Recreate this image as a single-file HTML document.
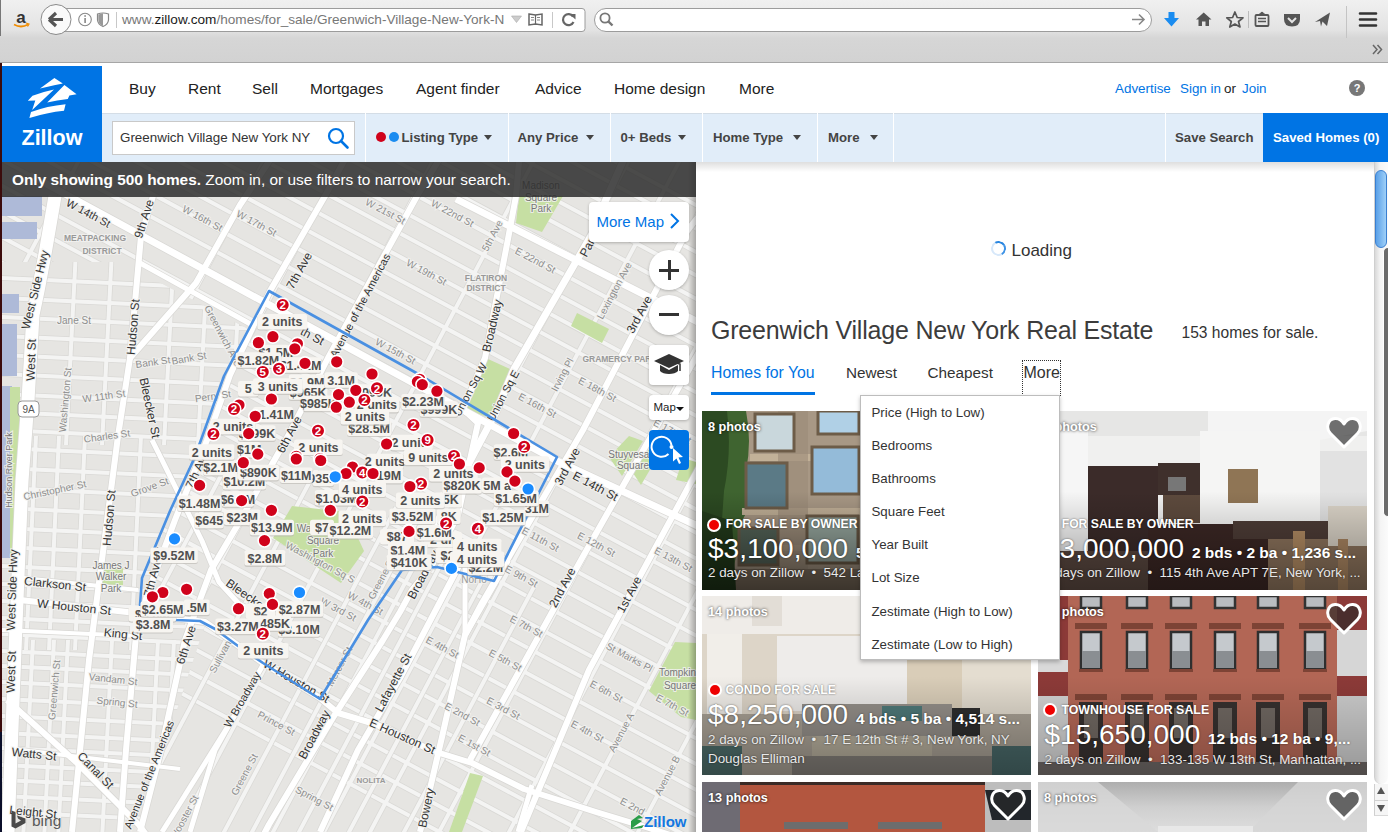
<!DOCTYPE html>
<html><head><meta charset="utf-8">
<style>
*{margin:0;padding:0;box-sizing:border-box}
html,body{width:1388px;height:832px;overflow:hidden;background:#fff;font-family:"Liberation Sans",sans-serif}
.a{position:absolute}
.t{position:absolute;white-space:nowrap;line-height:1}
#chrome{left:0;top:0;width:1388px;height:63px;background:linear-gradient(#f0f0f0 0,#e3e3e3 30px,#d6d6d6 38px,#d2d2d2 62px);border-bottom:1px solid #a6a6a6}
.nav{font-size:15.5px;color:#222;margin-top:-1px}
.flt{font-size:13.2px;font-weight:bold;color:#444}
.caret{position:absolute;width:0;height:0;border-left:4px solid transparent;border-right:4px solid transparent;border-top:5px solid #444}
.sep{position:absolute;top:113px;width:1px;height:49px;background:#fff}
.card{position:absolute;width:329px;height:179px;overflow:hidden}
.ph{font-size:12.7px;color:#fff;font-weight:bold;text-shadow:0 0 3px rgba(0,0,0,.8)}
.stat{font-size:13.5px;font-weight:bold;color:#fff;text-shadow:0 0 2px rgba(0,0,0,.6)}
.price{font-size:27px;color:#fff;text-shadow:0 0 2px rgba(0,0,0,.6)}
.facts{font-size:16px;font-weight:bold;color:#fff;text-shadow:0 0 2px rgba(0,0,0,.6)}
.sub{font-size:14px;color:#e8e8e8;text-shadow:0 0 2px rgba(0,0,0,.6)}
.dd{font-size:13.5px;color:#333}
</style></head><body>
<!-- browser chrome -->
<div id="chrome" class="a"></div>
<svg class="a" style="left:0;top:0" width="1388" height="63" viewBox="0 0 1388 63" font-family="Liberation Sans, sans-serif">
<text x="21" y="23" font-size="17" font-weight="bold" fill="#333" text-anchor="middle">a</text>
<path d="M14 24.5 Q21 28.5 28 24.5" fill="none" stroke="#f08c00" stroke-width="1.8"/><path d="M26 23 L29 24 L27.5 26.5" fill="none" stroke="#f08c00" stroke-width="1.2"/>
<rect x="60" y="8.5" width="525" height="23" rx="3" fill="#fff" stroke="#9c9c9c"/>
<circle cx="56" cy="19.5" r="15" fill="#fafafa" stroke="#8a8a8a"/>
<path d="M49 19.5 L56 13 M49 19.5 L56 26 M49.5 19.5 L63 19.5" stroke="#555" stroke-width="3.2" fill="none" stroke-linecap="butt"/>
<circle cx="85" cy="19.5" r="6.3" fill="none" stroke="#888" stroke-width="1.1"/><rect x="84.3" y="18" width="1.6" height="5" fill="#888"/><rect x="84.3" y="15.2" width="1.6" height="1.6" fill="#888"/>
<path d="M97.5 14 Q103 12 108.5 14 L108.5 20 Q108 24.5 103 26.5 Q98 24.5 97.5 20 Z" fill="none" stroke="#888" stroke-width="1.2"/><path d="M103 13.2 L103 26 Q98.5 24 98.3 20 L98.3 14.5 Z" fill="#999"/>
<rect x="116" y="12" width="1" height="16" fill="#c8c8c8"/>
<text x="122" y="24.3" font-size="13.6" fill="#777"><tspan>www.</tspan><tspan fill="#1a1a1a">zillow.com</tspan><tspan>/homes/for_sale/Greenwich-Village-New-York-N</tspan></text>
<rect x="504" y="10" width="10" height="20" fill="#fff"/>
<path d="M511.5 16 L521.5 16 L516.5 22.5 Z" fill="#ccc" stroke="#aaa" stroke-width=".6"/>
<path d="M529 14 L535.5 15 L542 14 L542 25 L535.5 24 L529 25 Z" fill="none" stroke="#666" stroke-width="1.5"/><path d="M535.5 15 L535.5 24" stroke="#666" stroke-width="1.2"/><path d="M531 17.5 L534 17.5 M531 20 L534 20 M537 17.5 L540 17.5 M537 20 L540 20" stroke="#777" stroke-width=".9"/>
<rect x="552" y="12" width="1" height="16" fill="#c8c8c8"/>
<path d="M573 16.5 A5.5 5.5 0 1 0 573.5 22" fill="none" stroke="#666" stroke-width="2.2"/><path d="M569.5 14 L575.5 14 L575.5 19.5 Z" fill="#666"/>
<rect x="594.5" y="8.5" width="557" height="23" rx="11.5" fill="#fff" stroke="#9c9c9c"/>
<circle cx="605" cy="18" r="4.6" fill="none" stroke="#777" stroke-width="1.8"/><path d="M608.3 21.3 L612.5 25.5" stroke="#777" stroke-width="2.4"/>
<path d="M1132 19.5 L1144 19.5 M1139 14.5 L1144 19.5 L1139 24.5" fill="none" stroke="#888" stroke-width="1.6"/>
<path d="M1168.5 12 L1174.5 12 L1174.5 18 L1179 18 L1171.5 26.5 L1164 18 L1168.5 18 Z" fill="#1a8cf0"/>
<path d="M1203.7 12.5 L1211.5 19.5 L1209 19.5 L1209 26 L1205.5 26 L1205.5 21.5 L1202 21.5 L1202 26 L1198.5 26 L1198.5 19.5 L1196 19.5 Z" fill="#555"/>
<path d="M1234.9 12 L1237.2 17.5 L1243 17.8 L1238.5 21.5 L1240 27 L1234.9 24 L1229.8 27 L1231.3 21.5 L1226.8 17.8 L1232.6 17.5 Z" fill="none" stroke="#555" stroke-width="1.7" stroke-linejoin="round"/>
<rect x="1248" y="11" width="1" height="17" fill="#bbb"/>
<rect x="1255.5" y="15" width="13" height="11" rx="1" fill="none" stroke="#555" stroke-width="1.8"/><path d="M1259 14.5 L1262 12 L1265 14.5" fill="#555" stroke="#555"/><path d="M1258 18.5 L1266 18.5 M1258 21.5 L1266 21.5" stroke="#555" stroke-width="1.3"/>
<path d="M1284 14 L1300 14 L1300 19 Q1300 26.5 1292 26.5 Q1284 26.5 1284 19 Z" fill="#555"/><path d="M1288 18 L1292 22 L1296 18" fill="none" stroke="#e4e4e4" stroke-width="2"/>
<path d="M1315 22 L1330 12.5 L1327 26 L1322.5 21.5 L1321 26.5 L1320 21 Z" fill="#555"/>
<rect x="1346" y="6" width="1" height="32" fill="#c4c4c4"/>
<path d="M1360 13.5 L1376 13.5 M1360 19.5 L1376 19.5 M1360 25.5 L1376 25.5" stroke="#333" stroke-width="2.6" stroke-linecap="round"/>
<path d="M1373 45 L1377 49.5 L1373 54 M1377.5 45 L1381.5 49.5 L1377.5 54" fill="none" stroke="#666" stroke-width="1.5"/>
</svg>
<div class="a" style="left:0;top:63px;width:2px;height:669px;background:#3b0b0b;z-index:50"></div><div class="a" style="left:0;top:732px;width:2px;height:100px;background:#0b0f2a;z-index:50"></div><div class="a" style="left:0;top:0;width:1px;height:36px;background:#777;z-index:50"></div>

<!-- zillow header -->
<div class="a" style="left:2px;top:63px;width:1386px;height:50px;background:#fff"></div>
<div class="a" style="left:2px;top:66px;width:100px;height:96px;background:#0074e4;z-index:5"></div>
<svg class="a" style="left:2px;top:66px;z-index:6" width="100" height="96" viewBox="0 0 100 96" font-family="Liberation Sans, sans-serif">
<path d="M38 22.6 L52.4 11.9 L60.8 17.6 Q55 18.5 38 22.6 Z" fill="#fff"/>
<path d="M25.8 34.8 L30.5 29.8 Q40 26 52 23.5 L30.2 44.1 L33.3 34.4 Z" fill="#fff"/>
<path d="M45.2 36.6 L62.4 19.1 L74.6 28.2 L67.4 29.4 L65.8 32.9 Q55 34 45.2 36.6 Z" fill="#fff"/>
<path d="M29 46 Q45 40 63.6 38.2 L62 44.8 Q45 46.5 27.4 52 Z" fill="#fff"/>
<text x="19.5" y="79" font-size="21.5" font-weight="bold" fill="#fff">Zillow</text>
</svg>
<div class="t nav" style="left:129px;top:81.5px">Buy</div>
<div class="t nav" style="left:188px;top:81.5px">Rent</div>
<div class="t nav" style="left:252px;top:81.5px">Sell</div>
<div class="t nav" style="left:310px;top:81.5px">Mortgages</div>
<div class="t nav" style="left:416px;top:81.5px">Agent finder</div>
<div class="t nav" style="left:535px;top:81.5px">Advice</div>
<div class="t nav" style="left:614px;top:81.5px">Home design</div>
<div class="t nav" style="left:739px;top:81.5px">More</div>
<div class="t" style="left:1115px;top:81.5px;font-size:13.4px;color:#0074e4">Advertise</div>
<div class="t" style="left:1180px;top:81.5px;font-size:13.4px;color:#0074e4">Sign in</div>
<div class="t" style="left:1224px;top:81.5px;font-size:13.4px;color:#222">or</div>
<div class="t" style="left:1242px;top:81.5px;font-size:13.4px;color:#0074e4">Join</div>
<div class="a" style="left:1349px;top:80px;width:16px;height:16px;border-radius:50%;background:#777;color:#fff;font-size:11px;font-weight:bold;text-align:center;line-height:16px">?</div>

<!-- filter bar -->
<div class="a" style="left:2px;top:113px;width:1386px;height:49px;background:#e1edf9;border-top:1px solid #d4dde6"></div>
<div class="a" style="left:112px;top:121px;width:243px;height:34px;background:#fff;border:1px solid #c9c9c9"></div>
<div class="t" style="left:120px;top:131px;font-size:13.4px;color:#333">Greenwich Village New York NY</div>
<svg class="a" style="left:326px;top:126px" width="24" height="24" viewBox="0 0 24 24"><circle cx="10" cy="10" r="7" fill="none" stroke="#0074e4" stroke-width="2.2"/><path d="M15 15 L21.5 21.5" stroke="#0074e4" stroke-width="2.6" stroke-linecap="round"/></svg>
<div class="sep" style="left:365px"></div>
<div class="sep" style="left:508px"></div>
<div class="sep" style="left:610px"></div>
<div class="sep" style="left:702px"></div>
<div class="sep" style="left:817px"></div>
<div class="sep" style="left:893px"></div>
<div class="sep" style="left:1165px"></div>
<div class="a" style="left:376px;top:132px;width:10px;height:10px;border-radius:50%;background:#d0021b"></div>
<div class="a" style="left:389px;top:132px;width:10px;height:10px;border-radius:50%;background:#1b8cf0"></div>
<div class="t flt" style="left:401.5px;top:131px">Listing Type</div><div class="caret" style="left:484px;top:135px"></div>
<div class="t flt" style="left:517.5px;top:131px">Any Price</div><div class="caret" style="left:586px;top:135px"></div>
<div class="t flt" style="left:620.5px;top:131px">0+ Beds</div><div class="caret" style="left:678px;top:135px"></div>
<div class="t flt" style="left:713px;top:131px">Home Type</div><div class="caret" style="left:793px;top:135px"></div>
<div class="t flt" style="left:828px;top:131px">More</div><div class="caret" style="left:870px;top:135px"></div>
<div class="t flt" style="left:1175px;top:131px">Save Search</div>
<div class="a" style="left:1263px;top:113px;width:125px;height:49px;background:#0074e4"></div>
<div class="t flt" style="left:1273px;top:131px;color:#fff">Saved Homes (0)</div>

<!-- map -->
<svg class="a" style="left:0;top:0" width="696" height="832" viewBox="0 0 696 832">
<defs><clipPath id="mc"><rect x="2" y="162" width="694" height="670"/></clipPath><clipPath id="westc"><polygon points="2,262 121,262 250,330 222,376 200,440 170,510 141,604 141,625 205,625 180,700 140,832 2,832"/></clipPath><clipPath id="eastc"><polygon points="121,150 700,150 700,832 140,832 180,700 205,625 141,625 141,604 170,510 200,440 222,376 250,330 121,262 2,262 2,150"/></clipPath></defs>
<g clip-path="url(#mc)">
<rect x="0" y="150" width="700" height="690" fill="#e6e5e2"/>
<g clip-path="url(#eastc)" stroke="#d9d8d5" stroke-width="5.5"><line x1="-50.0" y1="-195.5" x2="750.0" y2="234.1"/><line x1="-50.0" y1="-172.1" x2="750.0" y2="257.5"/><line x1="-50.0" y1="-148.7" x2="750.0" y2="280.9"/><line x1="-50.0" y1="-125.3" x2="750.0" y2="304.3"/><line x1="-50.0" y1="-101.9" x2="750.0" y2="327.7"/><line x1="-50.0" y1="-78.5" x2="750.0" y2="351.1"/><line x1="-50.0" y1="-55.1" x2="750.0" y2="374.5"/><line x1="-50.0" y1="-31.7" x2="750.0" y2="397.9"/><line x1="-50.0" y1="-8.3" x2="750.0" y2="421.3"/><line x1="-50.0" y1="15.1" x2="750.0" y2="444.7"/><line x1="-50.0" y1="38.5" x2="750.0" y2="468.1"/><line x1="-50.0" y1="61.9" x2="750.0" y2="491.5"/><line x1="-50.0" y1="85.3" x2="750.0" y2="514.9"/><line x1="-50.0" y1="108.7" x2="750.0" y2="538.3"/><line x1="-50.0" y1="132.1" x2="750.0" y2="561.7"/><line x1="-50.0" y1="157.8" x2="750.0" y2="587.4"/><line x1="-50.0" y1="183.5" x2="750.0" y2="613.1"/><line x1="-50.0" y1="209.2" x2="750.0" y2="638.8"/><line x1="-50.0" y1="234.9" x2="750.0" y2="664.5"/><line x1="-50.0" y1="260.6" x2="750.0" y2="690.2"/><line x1="-50.0" y1="286.3" x2="750.0" y2="715.9"/><line x1="-50.0" y1="312.0" x2="750.0" y2="741.6"/><line x1="-50.0" y1="337.7" x2="750.0" y2="767.3"/><line x1="-50.0" y1="363.4" x2="750.0" y2="793.0"/><line x1="-50.0" y1="389.1" x2="750.0" y2="818.7"/><line x1="-50.0" y1="414.8" x2="750.0" y2="844.4"/><line x1="-50.0" y1="440.5" x2="750.0" y2="870.1"/><line x1="-50.0" y1="466.2" x2="750.0" y2="895.8"/><line x1="-50.0" y1="491.9" x2="750.0" y2="921.5"/><line x1="-50.0" y1="517.6" x2="750.0" y2="947.2"/><line x1="-50.0" y1="543.3" x2="750.0" y2="972.9"/><line x1="-50.0" y1="569.0" x2="750.0" y2="998.6"/><line x1="111.0" y1="100.0" x2="-313.0" y2="900.0"/><line x1="296.0" y1="100.0" x2="-128.0" y2="900.0"/><line x1="375.0" y1="100.0" x2="-49.0" y2="900.0"/><line x1="465.0" y1="100.0" x2="41.0" y2="900.0"/><line x1="566.0" y1="100.0" x2="142.0" y2="900.0"/><line x1="661.0" y1="100.0" x2="237.0" y2="900.0"/><line x1="712.0" y1="100.0" x2="288.0" y2="900.0"/><line x1="758.0" y1="100.0" x2="334.0" y2="900.0"/><line x1="827.0" y1="100.0" x2="403.0" y2="900.0"/><line x1="897.0" y1="100.0" x2="473.0" y2="900.0"/><line x1="958.0" y1="100.0" x2="534.0" y2="900.0"/><line x1="1026.0" y1="100.0" x2="602.0" y2="900.0"/></g>
<g clip-path="url(#eastc)" stroke="#f4f4f3" stroke-width="4"><line x1="-50.0" y1="-195.5" x2="750.0" y2="234.1"/><line x1="-50.0" y1="-172.1" x2="750.0" y2="257.5"/><line x1="-50.0" y1="-148.7" x2="750.0" y2="280.9"/><line x1="-50.0" y1="-125.3" x2="750.0" y2="304.3"/><line x1="-50.0" y1="-101.9" x2="750.0" y2="327.7"/><line x1="-50.0" y1="-78.5" x2="750.0" y2="351.1"/><line x1="-50.0" y1="-55.1" x2="750.0" y2="374.5"/><line x1="-50.0" y1="-31.7" x2="750.0" y2="397.9"/><line x1="-50.0" y1="-8.3" x2="750.0" y2="421.3"/><line x1="-50.0" y1="15.1" x2="750.0" y2="444.7"/><line x1="-50.0" y1="38.5" x2="750.0" y2="468.1"/><line x1="-50.0" y1="61.9" x2="750.0" y2="491.5"/><line x1="-50.0" y1="85.3" x2="750.0" y2="514.9"/><line x1="-50.0" y1="108.7" x2="750.0" y2="538.3"/><line x1="-50.0" y1="132.1" x2="750.0" y2="561.7"/><line x1="-50.0" y1="157.8" x2="750.0" y2="587.4"/><line x1="-50.0" y1="183.5" x2="750.0" y2="613.1"/><line x1="-50.0" y1="209.2" x2="750.0" y2="638.8"/><line x1="-50.0" y1="234.9" x2="750.0" y2="664.5"/><line x1="-50.0" y1="260.6" x2="750.0" y2="690.2"/><line x1="-50.0" y1="286.3" x2="750.0" y2="715.9"/><line x1="-50.0" y1="312.0" x2="750.0" y2="741.6"/><line x1="-50.0" y1="337.7" x2="750.0" y2="767.3"/><line x1="-50.0" y1="363.4" x2="750.0" y2="793.0"/><line x1="-50.0" y1="389.1" x2="750.0" y2="818.7"/><line x1="-50.0" y1="414.8" x2="750.0" y2="844.4"/><line x1="-50.0" y1="440.5" x2="750.0" y2="870.1"/><line x1="-50.0" y1="466.2" x2="750.0" y2="895.8"/><line x1="-50.0" y1="491.9" x2="750.0" y2="921.5"/><line x1="-50.0" y1="517.6" x2="750.0" y2="947.2"/><line x1="-50.0" y1="543.3" x2="750.0" y2="972.9"/><line x1="-50.0" y1="569.0" x2="750.0" y2="998.6"/><line x1="111.0" y1="100.0" x2="-313.0" y2="900.0"/><line x1="296.0" y1="100.0" x2="-128.0" y2="900.0"/><line x1="375.0" y1="100.0" x2="-49.0" y2="900.0"/><line x1="465.0" y1="100.0" x2="41.0" y2="900.0"/><line x1="566.0" y1="100.0" x2="142.0" y2="900.0"/><line x1="661.0" y1="100.0" x2="237.0" y2="900.0"/><line x1="712.0" y1="100.0" x2="288.0" y2="900.0"/><line x1="758.0" y1="100.0" x2="334.0" y2="900.0"/><line x1="827.0" y1="100.0" x2="403.0" y2="900.0"/><line x1="897.0" y1="100.0" x2="473.0" y2="900.0"/><line x1="958.0" y1="100.0" x2="534.0" y2="900.0"/><line x1="1026.0" y1="100.0" x2="602.0" y2="900.0"/></g>
<clipPath id="densec"><polygon points="150,470 330,470 560,600 560,832 140,832"/></clipPath>
<g clip-path="url(#eastc)"><g clip-path="url(#densec)" stroke="#d9d8d5" stroke-width="5.5"><line x1="420.0" y1="100" x2="-4.0" y2="900"/><line x1="512.0" y1="100" x2="88.0" y2="900"/><line x1="612.0" y1="100" x2="188.0" y2="900"/><line x1="640.0" y1="100" x2="216.0" y2="900"/><line x1="687.0" y1="100" x2="263.0" y2="900"/><line x1="737.0" y1="100" x2="313.0" y2="900"/><line x1="792.0" y1="100" x2="368.0" y2="900"/></g></g>
<g clip-path="url(#eastc)"><g clip-path="url(#densec)" stroke="#f4f4f3" stroke-width="4"><line x1="420.0" y1="100" x2="-4.0" y2="900"/><line x1="512.0" y1="100" x2="88.0" y2="900"/><line x1="612.0" y1="100" x2="188.0" y2="900"/><line x1="640.0" y1="100" x2="216.0" y2="900"/><line x1="687.0" y1="100" x2="263.0" y2="900"/><line x1="737.0" y1="100" x2="313.0" y2="900"/><line x1="792.0" y1="100" x2="368.0" y2="900"/></g></g>
<g clip-path="url(#westc)" stroke="#d9d8d5" stroke-width="5.5"><line x1="0" y1="278" x2="260" y2="290"/><line x1="0" y1="298" x2="260" y2="310"/><line x1="0" y1="317" x2="260" y2="329"/><line x1="0" y1="336" x2="260" y2="348"/><line x1="0" y1="355" x2="260" y2="367"/><line x1="0" y1="374" x2="260" y2="386"/><line x1="0" y1="394" x2="260" y2="406"/><line x1="0" y1="412" x2="260" y2="424"/><line x1="0" y1="430" x2="260" y2="442"/><line x1="0" y1="448" x2="260" y2="460"/><line x1="0" y1="468" x2="260" y2="480"/><line x1="0" y1="488" x2="260" y2="500"/><line x1="0" y1="508" x2="260" y2="520"/><line x1="0" y1="528" x2="260" y2="540"/><line x1="0" y1="547" x2="260" y2="559"/><line x1="0" y1="566" x2="260" y2="578"/><line x1="0" y1="584" x2="260" y2="596"/><line x1="0" y1="601" x2="260" y2="613"/><line x1="0" y1="618" x2="260" y2="630"/><line x1="0" y1="634" x2="260" y2="646"/><line x1="0" y1="651" x2="260" y2="663"/><line x1="0" y1="666" x2="260" y2="678"/><line x1="0" y1="682" x2="260" y2="694"/><line x1="0" y1="699" x2="260" y2="711"/><line x1="0" y1="716" x2="260" y2="728"/><line x1="0" y1="733" x2="260" y2="745"/><line x1="0" y1="748" x2="260" y2="760"/><line x1="0" y1="765" x2="260" y2="777"/><line x1="0" y1="780" x2="260" y2="792"/><line x1="0" y1="796" x2="260" y2="808"/><line x1="0" y1="812" x2="260" y2="824"/><line x1="76" y1="250" x2="66" y2="445"/><line x1="112" y1="250" x2="102" y2="445"/><line x1="174" y1="250" x2="164" y2="445"/><line x1="208" y1="250" x2="198" y2="445"/><line x1="241" y1="250" x2="231" y2="445"/><line x1="36" y1="436" x2="26" y2="650"/><line x1="59" y1="436" x2="49" y2="650"/><line x1="85" y1="436" x2="75" y2="650"/><line x1="141" y1="436" x2="131" y2="650"/><line x1="15" y1="640" x2="5" y2="840"/><line x1="33" y1="640" x2="23" y2="840"/><line x1="54" y1="640" x2="44" y2="840"/><line x1="68" y1="640" x2="58" y2="840"/><line x1="112" y1="640" x2="102" y2="840"/><line x1="158" y1="640" x2="148" y2="840"/><line x1="174" y1="640" x2="164" y2="840"/></g>
<g clip-path="url(#westc)" stroke="#f4f4f3" stroke-width="4"><line x1="0" y1="278" x2="260" y2="290"/><line x1="0" y1="298" x2="260" y2="310"/><line x1="0" y1="317" x2="260" y2="329"/><line x1="0" y1="336" x2="260" y2="348"/><line x1="0" y1="355" x2="260" y2="367"/><line x1="0" y1="374" x2="260" y2="386"/><line x1="0" y1="394" x2="260" y2="406"/><line x1="0" y1="412" x2="260" y2="424"/><line x1="0" y1="430" x2="260" y2="442"/><line x1="0" y1="448" x2="260" y2="460"/><line x1="0" y1="468" x2="260" y2="480"/><line x1="0" y1="488" x2="260" y2="500"/><line x1="0" y1="508" x2="260" y2="520"/><line x1="0" y1="528" x2="260" y2="540"/><line x1="0" y1="547" x2="260" y2="559"/><line x1="0" y1="566" x2="260" y2="578"/><line x1="0" y1="584" x2="260" y2="596"/><line x1="0" y1="601" x2="260" y2="613"/><line x1="0" y1="618" x2="260" y2="630"/><line x1="0" y1="634" x2="260" y2="646"/><line x1="0" y1="651" x2="260" y2="663"/><line x1="0" y1="666" x2="260" y2="678"/><line x1="0" y1="682" x2="260" y2="694"/><line x1="0" y1="699" x2="260" y2="711"/><line x1="0" y1="716" x2="260" y2="728"/><line x1="0" y1="733" x2="260" y2="745"/><line x1="0" y1="748" x2="260" y2="760"/><line x1="0" y1="765" x2="260" y2="777"/><line x1="0" y1="780" x2="260" y2="792"/><line x1="0" y1="796" x2="260" y2="808"/><line x1="0" y1="812" x2="260" y2="824"/><line x1="76" y1="250" x2="66" y2="445"/><line x1="112" y1="250" x2="102" y2="445"/><line x1="174" y1="250" x2="164" y2="445"/><line x1="208" y1="250" x2="198" y2="445"/><line x1="241" y1="250" x2="231" y2="445"/><line x1="36" y1="436" x2="26" y2="650"/><line x1="59" y1="436" x2="49" y2="650"/><line x1="85" y1="436" x2="75" y2="650"/><line x1="141" y1="436" x2="131" y2="650"/><line x1="15" y1="640" x2="5" y2="840"/><line x1="33" y1="640" x2="23" y2="840"/><line x1="54" y1="640" x2="44" y2="840"/><line x1="68" y1="640" x2="58" y2="840"/><line x1="112" y1="640" x2="102" y2="840"/><line x1="158" y1="640" x2="148" y2="840"/><line x1="174" y1="640" x2="164" y2="840"/></g>
<rect x="2" y="196" width="40" height="20" fill="#aebad8"/>
<rect x="2" y="222" width="35" height="17" fill="#aebad8"/>
<rect x="2" y="294" width="17" height="19" fill="#aebad8"/>
<rect x="2" y="324" width="15" height="52" fill="#aebad8"/>
<rect x="2" y="386" width="10" height="50" fill="#aebad8"/>
<rect x="2" y="436" width="8" height="122" fill="#aebad8"/>
<rect x="10" y="387" width="10" height="170" fill="#c6dfa3"/>
<polygon points="519.0,196.0 563.0,196.0 542.0,232.0 516.0,223.0" fill="#c6dfa3"/>
<polygon points="488.0,359.0 512.0,370.0 491.0,418.0 463.0,409.0" fill="#c6dfa3"/>
<polygon points="577.0,313.0 609.0,329.0 602.0,343.0 571.0,326.0" fill="#c6dfa3"/>
<polygon points="292.0,506.0 346.0,512.0 364.0,551.0 341.0,583.0 273.0,538.0" fill="#c6dfa3"/>
<polygon points="675.0,642.0 696.0,643.0 696.0,720.0 681.0,717.0 649.0,691.0" fill="#c6dfa3"/>
<polygon points="470.0,773.0 483.0,776.0 462.0,832.0 449.0,832.0" fill="#c6dfa3"/>
<polygon points="609.0,457.0 629.0,436.0 643.0,441.0 622.0,476.0" fill="#c6dfa3"/>
<polygon points="629.0,467.0 652.0,447.0 658.0,456.0 641.0,485.0" fill="#c6dfa3"/>
<polygon points="102.0,568.0 123.0,568.0 123.0,587.0 102.0,587.0" fill="#c6dfa3"/>
<polygon points="683.0,458.0 696.0,462.0 696.0,484.0 676.0,480.0" fill="#c6dfa3"/>
<polyline points="55.0,196.0 45.0,254.0 38.0,291.0 33.0,315.0 28.0,400.0 22.0,481.0 17.0,600.0 13.0,702.0 8.0,832.0" fill="none" stroke="#d9d8d5" stroke-width="14.5" stroke-linejoin="round"/>
<polyline points="30.0,175.0 557.0,461.0 700.0,527.0" fill="none" stroke="#d9d8d5" stroke-width="8.5" stroke-linejoin="round"/>
<polyline points="153.0,196.0 141.0,236.0 130.0,358.0 118.0,436.0 89.0,660.0 72.0,832.0" fill="none" stroke="#d9d8d5" stroke-width="7.5" stroke-linejoin="round"/>
<polyline points="270.0,160.0 240.0,205.0 196.0,283.0 130.0,358.0" fill="none" stroke="#d9d8d5" stroke-width="7.5" stroke-linejoin="round"/>
<polyline points="140.0,263.0 254.0,326.0" fill="none" stroke="#d9d8d5" stroke-width="6.5" stroke-linejoin="round"/>
<polyline points="350.0,150.0 325.0,196.0 270.0,291.0 230.0,375.0 207.0,440.0 175.0,520.0 147.0,595.0 136.0,635.0 126.0,750.0 120.0,832.0" fill="none" stroke="#d9d8d5" stroke-width="7.5" stroke-linejoin="round"/>
<polyline points="445.0,150.0 417.0,196.0 328.0,358.0 288.0,436.0 240.0,521.0 211.0,570.0 185.0,640.0 161.0,750.0 140.0,832.0" fill="none" stroke="#d9d8d5" stroke-width="7.5" stroke-linejoin="round"/>
<polyline points="520.0,150.0 516.0,196.0 508.0,239.0 485.0,358.0 463.0,409.0 478.0,423.0 458.0,515.0 432.0,565.0 412.0,590.0 400.0,612.0 383.0,640.0 334.0,716.0 269.0,824.5 264.0,834.0" fill="none" stroke="#d9d8d5" stroke-width="7.5" stroke-linejoin="round"/>
<polyline points="628.0,150.0 600.0,213.0 592.0,234.0 514.0,369.0 496.0,412.0 460.0,480.0 430.0,535.0" fill="none" stroke="#d9d8d5" stroke-width="8.5" stroke-linejoin="round"/>
<polyline points="456.0,199.0 700.0,323.0" fill="none" stroke="#d9d8d5" stroke-width="8.5" stroke-linejoin="round"/>
<polyline points="720.0,190.0 687.0,231.0 583.0,430.0 482.0,603.0 465.0,635.0" fill="none" stroke="#d9d8d5" stroke-width="7.5" stroke-linejoin="round"/>
<polyline points="700.0,350.0 581.0,560.0 470.0,760.0" fill="none" stroke="#d9d8d5" stroke-width="7.5" stroke-linejoin="round"/>
<polyline points="710.0,446.0 696.0,473.0 589.0,670.0 521.0,832.0" fill="none" stroke="#d9d8d5" stroke-width="7.5" stroke-linejoin="round"/>
<polyline points="152.0,440.0 162.0,460.0 202.0,541.0 219.0,582.0 240.0,605.0 260.0,612.0" fill="none" stroke="#d9d8d5" stroke-width="6.5" stroke-linejoin="round"/>
<polyline points="20.0,600.0 136.0,613.0 205.0,622.0 263.0,663.0 320.0,698.0 338.0,713.0 375.0,724.0 433.0,751.0 472.0,763.0 524.0,789.0 596.0,812.0 649.0,828.0 700.0,845.0" fill="none" stroke="#d9d8d5" stroke-width="7.5" stroke-linejoin="round"/>
<polyline points="508.0,560.0 465.0,635.0 442.0,737.0 420.0,832.0" fill="none" stroke="#d9d8d5" stroke-width="7.5" stroke-linejoin="round"/>
<polyline points="465.0,560.0 465.0,635.0" fill="none" stroke="#d9d8d5" stroke-width="6.5" stroke-linejoin="round"/>
<polyline points="462.0,560.0 420.0,640.0 400.0,678.0 358.0,750.0 320.0,832.0" fill="none" stroke="#d9d8d5" stroke-width="7.5" stroke-linejoin="round"/>
<polyline points="263.0,665.0 215.0,750.0 190.0,832.0" fill="none" stroke="#d9d8d5" stroke-width="6.5" stroke-linejoin="round"/>
<polyline points="7.0,700.0 76.0,762.0 139.0,825.0 150.0,840.0" fill="none" stroke="#d9d8d5" stroke-width="7.5" stroke-linejoin="round"/>
<polyline points="5.0,748.0 180.0,769.0" fill="none" stroke="#d9d8d5" stroke-width="5.5" stroke-linejoin="round"/>
<polyline points="23.0,578.0 138.0,590.0" fill="none" stroke="#d9d8d5" stroke-width="5.5" stroke-linejoin="round"/>
<polyline points="0.0,630.0 136.0,636.0" fill="none" stroke="#d9d8d5" stroke-width="5.5" stroke-linejoin="round"/>
<polyline points="240.0,707.0 162.0,832.0" fill="none" stroke="#d9d8d5" stroke-width="6.5" stroke-linejoin="round"/>
<polyline points="532.0,785.0 518.0,832.0" fill="none" stroke="#d9d8d5" stroke-width="6.5" stroke-linejoin="round"/>
<polyline points="55.0,196.0 45.0,254.0 38.0,291.0 33.0,315.0 28.0,400.0 22.0,481.0 17.0,600.0 13.0,702.0 8.0,832.0" fill="none" stroke="#ffffff" stroke-width="13" stroke-linejoin="round"/>
<polyline points="30.0,175.0 557.0,461.0 700.0,527.0" fill="none" stroke="#ffffff" stroke-width="7" stroke-linejoin="round"/>
<polyline points="153.0,196.0 141.0,236.0 130.0,358.0 118.0,436.0 89.0,660.0 72.0,832.0" fill="none" stroke="#ffffff" stroke-width="6" stroke-linejoin="round"/>
<polyline points="270.0,160.0 240.0,205.0 196.0,283.0 130.0,358.0" fill="none" stroke="#ffffff" stroke-width="6" stroke-linejoin="round"/>
<polyline points="140.0,263.0 254.0,326.0" fill="none" stroke="#ffffff" stroke-width="5" stroke-linejoin="round"/>
<polyline points="350.0,150.0 325.0,196.0 270.0,291.0 230.0,375.0 207.0,440.0 175.0,520.0 147.0,595.0 136.0,635.0 126.0,750.0 120.0,832.0" fill="none" stroke="#ffffff" stroke-width="6" stroke-linejoin="round"/>
<polyline points="445.0,150.0 417.0,196.0 328.0,358.0 288.0,436.0 240.0,521.0 211.0,570.0 185.0,640.0 161.0,750.0 140.0,832.0" fill="none" stroke="#ffffff" stroke-width="6" stroke-linejoin="round"/>
<polyline points="520.0,150.0 516.0,196.0 508.0,239.0 485.0,358.0 463.0,409.0 478.0,423.0 458.0,515.0 432.0,565.0 412.0,590.0 400.0,612.0 383.0,640.0 334.0,716.0 269.0,824.5 264.0,834.0" fill="none" stroke="#ffffff" stroke-width="6" stroke-linejoin="round"/>
<polyline points="628.0,150.0 600.0,213.0 592.0,234.0 514.0,369.0 496.0,412.0 460.0,480.0 430.0,535.0" fill="none" stroke="#ffffff" stroke-width="7" stroke-linejoin="round"/>
<polyline points="456.0,199.0 700.0,323.0" fill="none" stroke="#ffffff" stroke-width="7" stroke-linejoin="round"/>
<polyline points="720.0,190.0 687.0,231.0 583.0,430.0 482.0,603.0 465.0,635.0" fill="none" stroke="#ffffff" stroke-width="6" stroke-linejoin="round"/>
<polyline points="700.0,350.0 581.0,560.0 470.0,760.0" fill="none" stroke="#ffffff" stroke-width="6" stroke-linejoin="round"/>
<polyline points="710.0,446.0 696.0,473.0 589.0,670.0 521.0,832.0" fill="none" stroke="#ffffff" stroke-width="6" stroke-linejoin="round"/>
<polyline points="152.0,440.0 162.0,460.0 202.0,541.0 219.0,582.0 240.0,605.0 260.0,612.0" fill="none" stroke="#ffffff" stroke-width="5" stroke-linejoin="round"/>
<polyline points="20.0,600.0 136.0,613.0 205.0,622.0 263.0,663.0 320.0,698.0 338.0,713.0 375.0,724.0 433.0,751.0 472.0,763.0 524.0,789.0 596.0,812.0 649.0,828.0 700.0,845.0" fill="none" stroke="#ffffff" stroke-width="6" stroke-linejoin="round"/>
<polyline points="508.0,560.0 465.0,635.0 442.0,737.0 420.0,832.0" fill="none" stroke="#ffffff" stroke-width="6" stroke-linejoin="round"/>
<polyline points="465.0,560.0 465.0,635.0" fill="none" stroke="#ffffff" stroke-width="5" stroke-linejoin="round"/>
<polyline points="462.0,560.0 420.0,640.0 400.0,678.0 358.0,750.0 320.0,832.0" fill="none" stroke="#ffffff" stroke-width="6" stroke-linejoin="round"/>
<polyline points="263.0,665.0 215.0,750.0 190.0,832.0" fill="none" stroke="#ffffff" stroke-width="5" stroke-linejoin="round"/>
<polyline points="7.0,700.0 76.0,762.0 139.0,825.0 150.0,840.0" fill="none" stroke="#ffffff" stroke-width="6" stroke-linejoin="round"/>
<polyline points="5.0,748.0 180.0,769.0" fill="none" stroke="#ffffff" stroke-width="4" stroke-linejoin="round"/>
<polyline points="23.0,578.0 138.0,590.0" fill="none" stroke="#ffffff" stroke-width="4" stroke-linejoin="round"/>
<polyline points="0.0,630.0 136.0,636.0" fill="none" stroke="#ffffff" stroke-width="4" stroke-linejoin="round"/>
<polyline points="240.0,707.0 162.0,832.0" fill="none" stroke="#ffffff" stroke-width="5" stroke-linejoin="round"/>
<polyline points="532.0,785.0 518.0,832.0" fill="none" stroke="#ffffff" stroke-width="5" stroke-linejoin="round"/>
<g font-family="Liberation Sans, sans-serif">
<text x="36" y="290" transform="rotate(-76 36 290)" font-size="12" fill="#333" font-weight="normal" text-anchor="middle" dominant-baseline="middle" stroke="#f2f2f0" stroke-width="2.2" stroke-opacity=".85" paint-order="stroke">West Side Hwy</text>
<text x="32" y="360" transform="rotate(-88 32 360)" font-size="12" fill="#333" font-weight="normal" text-anchor="middle" dominant-baseline="middle" stroke="#f2f2f0" stroke-width="2.2" stroke-opacity=".85" paint-order="stroke">West St</text>
<text x="13" y="590" transform="rotate(-88 13 590)" font-size="12" fill="#333" font-weight="normal" text-anchor="middle" dominant-baseline="middle" stroke="#f2f2f0" stroke-width="2.2" stroke-opacity=".85" paint-order="stroke">West Side Hwy</text>
<text x="12" y="672" transform="rotate(-88 12 672)" font-size="12" fill="#333" font-weight="normal" text-anchor="middle" dominant-baseline="middle" stroke="#f2f2f0" stroke-width="2.2" stroke-opacity=".85" paint-order="stroke">West St</text>
<text x="134" y="327" transform="rotate(-85 134 327)" font-size="12" fill="#333" font-weight="normal" text-anchor="middle" dominant-baseline="middle" stroke="#f2f2f0" stroke-width="2.2" stroke-opacity=".85" paint-order="stroke">Hudson St</text>
<text x="110" y="518" transform="rotate(-85 110 518)" font-size="12" fill="#333" font-weight="normal" text-anchor="middle" dominant-baseline="middle" stroke="#f2f2f0" stroke-width="2.2" stroke-opacity=".85" paint-order="stroke">Hudson St</text>
<text x="149" y="408" transform="rotate(78 149 408)" font-size="12" fill="#333" font-weight="normal" text-anchor="middle" dominant-baseline="middle" stroke="#f2f2f0" stroke-width="2.2" stroke-opacity=".85" paint-order="stroke">Bleecker St</text>
<text x="145" y="219" transform="rotate(-72 145 219)" font-size="12" fill="#333" font-weight="normal" text-anchor="middle" dominant-baseline="middle" stroke="#f2f2f0" stroke-width="2.2" stroke-opacity=".85" paint-order="stroke">9th Ave</text>
<text x="300" y="271" transform="rotate(-61 300 271)" font-size="12" fill="#333" font-weight="normal" text-anchor="middle" dominant-baseline="middle" stroke="#f2f2f0" stroke-width="2.2" stroke-opacity=".85" paint-order="stroke">7th Ave</text>
<text x="88" y="214" transform="rotate(28 88 214)" font-size="11" fill="#333" font-weight="normal" text-anchor="middle" dominant-baseline="middle" stroke="#f2f2f0" stroke-width="2.2" stroke-opacity=".85" paint-order="stroke">W 14th St</text>
<text x="312" y="337" transform="rotate(28 312 337)" font-size="12" fill="#333" font-weight="normal" text-anchor="middle" dominant-baseline="middle" stroke="#f2f2f0" stroke-width="2.2" stroke-opacity=".85" paint-order="stroke">th St</text>
<text x="361" y="306" transform="rotate(-62 361 306)" font-size="11" fill="#333" font-weight="normal" text-anchor="middle" dominant-baseline="middle" stroke="#f2f2f0" stroke-width="2.2" stroke-opacity=".85" paint-order="stroke">Avenue of the Americas</text>
<text x="493" y="326" transform="rotate(-77 493 326)" font-size="12" fill="#333" font-weight="normal" text-anchor="middle" dominant-baseline="middle" stroke="#f2f2f0" stroke-width="2.2" stroke-opacity=".85" paint-order="stroke">Broadway</text>
<text x="588" y="248" transform="rotate(-62 588 248)" font-size="12" fill="#333" font-weight="normal" text-anchor="middle" dominant-baseline="middle" stroke="#f2f2f0" stroke-width="2.2" stroke-opacity=".85" paint-order="stroke">Par</text>
<text x="640" y="315" transform="rotate(-62 640 315)" font-size="12" fill="#333" font-weight="normal" text-anchor="middle" dominant-baseline="middle" stroke="#f2f2f0" stroke-width="2.2" stroke-opacity=".85" paint-order="stroke">3rd Ave</text>
<text x="568" y="467" transform="rotate(-62 568 467)" font-size="12" fill="#333" font-weight="normal" text-anchor="middle" dominant-baseline="middle" stroke="#f2f2f0" stroke-width="2.2" stroke-opacity=".85" paint-order="stroke">3rd Ave</text>
<text x="595" y="487" transform="rotate(28 595 487)" font-size="12" fill="#333" font-weight="normal" text-anchor="middle" dominant-baseline="middle" stroke="#f2f2f0" stroke-width="2.2" stroke-opacity=".85" paint-order="stroke">E 14th St</text>
<text x="563" y="588" transform="rotate(-62 563 588)" font-size="12" fill="#333" font-weight="normal" text-anchor="middle" dominant-baseline="middle" stroke="#f2f2f0" stroke-width="2.2" stroke-opacity=".85" paint-order="stroke">2nd Ave</text>
<text x="630" y="595" transform="rotate(-62 630 595)" font-size="12" fill="#333" font-weight="normal" text-anchor="middle" dominant-baseline="middle" stroke="#f2f2f0" stroke-width="2.2" stroke-opacity=".85" paint-order="stroke">1st Ave</text>
<text x="471" y="390" transform="rotate(-62 471 390)" font-size="11" fill="#333" font-weight="normal" text-anchor="middle" dominant-baseline="middle" stroke="#f2f2f0" stroke-width="2.2" stroke-opacity=".85" paint-order="stroke">Union Sq W</text>
<text x="504" y="396" transform="rotate(-62 504 396)" font-size="11" fill="#333" font-weight="normal" text-anchor="middle" dominant-baseline="middle" stroke="#f2f2f0" stroke-width="2.2" stroke-opacity=".85" paint-order="stroke">Union Sq E</text>
<text x="55" y="585" transform="rotate(6 55 585)" font-size="12" fill="#333" font-weight="normal" text-anchor="middle" dominant-baseline="middle" stroke="#f2f2f0" stroke-width="2.2" stroke-opacity=".85" paint-order="stroke">Clarkson St</text>
<text x="74" y="608" transform="rotate(6 74 608)" font-size="12" fill="#333" font-weight="normal" text-anchor="middle" dominant-baseline="middle" stroke="#f2f2f0" stroke-width="2.2" stroke-opacity=".85" paint-order="stroke">W Houston St</text>
<text x="123" y="635" transform="rotate(6 123 635)" font-size="12" fill="#333" font-weight="normal" text-anchor="middle" dominant-baseline="middle" stroke="#f2f2f0" stroke-width="2.2" stroke-opacity=".85" paint-order="stroke">King St</text>
<text x="187" y="645" transform="rotate(-72 187 645)" font-size="12" fill="#333" font-weight="normal" text-anchor="middle" dominant-baseline="middle" stroke="#f2f2f0" stroke-width="2.2" stroke-opacity=".85" paint-order="stroke">6th Ave</text>
<text x="243" y="700" transform="rotate(-60 243 700)" font-size="11" fill="#333" font-weight="normal" text-anchor="middle" dominant-baseline="middle" stroke="#f2f2f0" stroke-width="2.2" stroke-opacity=".85" paint-order="stroke">W Broadway</text>
<text x="296" y="682" transform="rotate(30 296 682)" font-size="12" fill="#333" font-weight="normal" text-anchor="middle" dominant-baseline="middle" stroke="#f2f2f0" stroke-width="2.2" stroke-opacity=".85" paint-order="stroke">W Houston St</text>
<text x="315" y="735" transform="rotate(-62 315 735)" font-size="12" fill="#333" font-weight="normal" text-anchor="middle" dominant-baseline="middle" stroke="#f2f2f0" stroke-width="2.2" stroke-opacity=".85" paint-order="stroke">Broadway</text>
<text x="394" y="683" transform="rotate(-62 394 683)" font-size="12" fill="#333" font-weight="normal" text-anchor="middle" dominant-baseline="middle" stroke="#f2f2f0" stroke-width="2.2" stroke-opacity=".85" paint-order="stroke">Lafayette St</text>
<text x="402" y="737" transform="rotate(24 402 737)" font-size="12" fill="#333" font-weight="normal" text-anchor="middle" dominant-baseline="middle" stroke="#f2f2f0" stroke-width="2.2" stroke-opacity=".85" paint-order="stroke">E Houston St</text>
<text x="427" y="808" transform="rotate(-78 427 808)" font-size="12" fill="#333" font-weight="normal" text-anchor="middle" dominant-baseline="middle" stroke="#f2f2f0" stroke-width="2.2" stroke-opacity=".85" paint-order="stroke">Bowery</text>
<text x="95" y="771" transform="rotate(46 95 771)" font-size="12" fill="#333" font-weight="normal" text-anchor="middle" dominant-baseline="middle" stroke="#f2f2f0" stroke-width="2.2" stroke-opacity=".85" paint-order="stroke">Canal St</text>
<text x="34" y="755" transform="rotate(6 34 755)" font-size="12" fill="#333" font-weight="normal" text-anchor="middle" dominant-baseline="middle" stroke="#f2f2f0" stroke-width="2.2" stroke-opacity=".85" paint-order="stroke">Watts St</text>
<text x="33" y="813" transform="rotate(6 33 813)" font-size="12" fill="#333" font-weight="normal" text-anchor="middle" dominant-baseline="middle" stroke="#f2f2f0" stroke-width="2.2" stroke-opacity=".85" paint-order="stroke">Leight St</text>
<text x="150" y="775" transform="rotate(-68 150 775)" font-size="11" fill="#333" font-weight="normal" text-anchor="middle" dominant-baseline="middle" stroke="#f2f2f0" stroke-width="2.2" stroke-opacity=".85" paint-order="stroke">Avenue of the Americas</text>
<text x="155" y="572" transform="rotate(-75 155 572)" font-size="12" fill="#333" font-weight="normal" text-anchor="middle" dominant-baseline="middle" stroke="#f2f2f0" stroke-width="2.2" stroke-opacity=".85" paint-order="stroke">7th Ave S</text>
<text x="290" y="435" transform="rotate(-62 290 435)" font-size="12" fill="#333" font-weight="normal" text-anchor="middle" dominant-baseline="middle" stroke="#f2f2f0" stroke-width="2.2" stroke-opacity=".85" paint-order="stroke">6th Ave</text>
<text x="198" y="470" transform="rotate(-65 198 470)" font-size="12" fill="#333" font-weight="normal" text-anchor="middle" dominant-baseline="middle" stroke="#f2f2f0" stroke-width="2.2" stroke-opacity=".85" paint-order="stroke">7th Ave</text>
<text x="424" y="575" transform="rotate(-62 424 575)" font-size="12" fill="#333" font-weight="normal" text-anchor="middle" dominant-baseline="middle" stroke="#f2f2f0" stroke-width="2.2" stroke-opacity=".85" paint-order="stroke">Broadway</text>
<text x="252" y="600" transform="rotate(35 252 600)" font-size="12" fill="#333" font-weight="normal" text-anchor="middle" dominant-baseline="middle" stroke="#f2f2f0" stroke-width="2.2" stroke-opacity=".85" paint-order="stroke">Bleecker St</text>
<text x="202" y="219" transform="rotate(28 202 219)" font-size="10" fill="#8e8e8e" font-weight="normal" text-anchor="middle" dominant-baseline="middle" stroke="#f2f2f0" stroke-width="2.2" stroke-opacity=".85" paint-order="stroke">W 16th St</text>
<text x="256" y="224" transform="rotate(28 256 224)" font-size="10" fill="#8e8e8e" font-weight="normal" text-anchor="middle" dominant-baseline="middle" stroke="#f2f2f0" stroke-width="2.2" stroke-opacity=".85" paint-order="stroke">W 17th St</text>
<text x="385" y="212" transform="rotate(28 385 212)" font-size="10" fill="#8e8e8e" font-weight="normal" text-anchor="middle" dominant-baseline="middle" stroke="#f2f2f0" stroke-width="2.2" stroke-opacity=".85" paint-order="stroke">W 21st St</text>
<text x="452" y="214" transform="rotate(28 452 214)" font-size="10" fill="#8e8e8e" font-weight="normal" text-anchor="middle" dominant-baseline="middle" stroke="#f2f2f0" stroke-width="2.2" stroke-opacity=".85" paint-order="stroke">W 22nd St</text>
<text x="426" y="273" transform="rotate(28 426 273)" font-size="10" fill="#8e8e8e" font-weight="normal" text-anchor="middle" dominant-baseline="middle" stroke="#f2f2f0" stroke-width="2.2" stroke-opacity=".85" paint-order="stroke">W 19th St</text>
<text x="395" y="352" transform="rotate(28 395 352)" font-size="10" fill="#8e8e8e" font-weight="normal" text-anchor="middle" dominant-baseline="middle" stroke="#f2f2f0" stroke-width="2.2" stroke-opacity=".85" paint-order="stroke">W 15th St</text>
<text x="535" y="261" transform="rotate(28 535 261)" font-size="10" fill="#8e8e8e" font-weight="normal" text-anchor="middle" dominant-baseline="middle" stroke="#f2f2f0" stroke-width="2.2" stroke-opacity=".85" paint-order="stroke">E 22nd St</text>
<text x="493" y="236" transform="rotate(-62 493 236)" font-size="10" fill="#8e8e8e" font-weight="normal" text-anchor="middle" dominant-baseline="middle" stroke="#f2f2f0" stroke-width="2.2" stroke-opacity=".85" paint-order="stroke">5th Ave</text>
<text x="615" y="291" transform="rotate(-62 615 291)" font-size="10" fill="#8e8e8e" font-weight="normal" text-anchor="middle" dominant-baseline="middle" stroke="#f2f2f0" stroke-width="2.2" stroke-opacity=".85" paint-order="stroke">Lexington Ave</text>
<text x="563" y="375" transform="rotate(-62 563 375)" font-size="10" fill="#8e8e8e" font-weight="normal" text-anchor="middle" dominant-baseline="middle" stroke="#f2f2f0" stroke-width="2.2" stroke-opacity=".85" paint-order="stroke">Irving Pl</text>
<text x="597" y="390" transform="rotate(28 597 390)" font-size="10" fill="#8e8e8e" font-weight="normal" text-anchor="middle" dominant-baseline="middle" stroke="#f2f2f0" stroke-width="2.2" stroke-opacity=".85" paint-order="stroke">E 18th St</text>
<text x="537" y="406" transform="rotate(28 537 406)" font-size="10" fill="#8e8e8e" font-weight="normal" text-anchor="middle" dominant-baseline="middle" stroke="#f2f2f0" stroke-width="2.2" stroke-opacity=".85" paint-order="stroke">E 16th St</text>
<text x="672" y="432" transform="rotate(28 672 432)" font-size="10" fill="#8e8e8e" font-weight="normal" text-anchor="middle" dominant-baseline="middle" stroke="#f2f2f0" stroke-width="2.2" stroke-opacity=".85" paint-order="stroke">E 17th St</text>
<text x="540" y="540" transform="rotate(28 540 540)" font-size="10" fill="#8e8e8e" font-weight="normal" text-anchor="middle" dominant-baseline="middle" stroke="#f2f2f0" stroke-width="2.2" stroke-opacity=".85" paint-order="stroke">E 11th St</text>
<text x="596" y="545" transform="rotate(28 596 545)" font-size="10" fill="#8e8e8e" font-weight="normal" text-anchor="middle" dominant-baseline="middle" stroke="#f2f2f0" stroke-width="2.2" stroke-opacity=".85" paint-order="stroke">E 12th St</text>
<text x="673" y="560" transform="rotate(28 673 560)" font-size="10" fill="#8e8e8e" font-weight="normal" text-anchor="middle" dominant-baseline="middle" stroke="#f2f2f0" stroke-width="2.2" stroke-opacity=".85" paint-order="stroke">E 13th St</text>
<text x="521" y="577" transform="rotate(28 521 577)" font-size="10" fill="#8e8e8e" font-weight="normal" text-anchor="middle" dominant-baseline="middle" stroke="#f2f2f0" stroke-width="2.2" stroke-opacity=".85" paint-order="stroke">E 9th St</text>
<text x="526" y="627" transform="rotate(28 526 627)" font-size="10" fill="#8e8e8e" font-weight="normal" text-anchor="middle" dominant-baseline="middle" stroke="#f2f2f0" stroke-width="2.2" stroke-opacity=".85" paint-order="stroke">E 7th St</text>
<text x="442" y="648" transform="rotate(28 442 648)" font-size="10" fill="#8e8e8e" font-weight="normal" text-anchor="middle" dominant-baseline="middle" stroke="#f2f2f0" stroke-width="2.2" stroke-opacity=".85" paint-order="stroke">E 4th St</text>
<text x="505" y="661" transform="rotate(28 505 661)" font-size="10" fill="#8e8e8e" font-weight="normal" text-anchor="middle" dominant-baseline="middle" stroke="#f2f2f0" stroke-width="2.2" stroke-opacity=".85" paint-order="stroke">E 5th St</text>
<text x="503" y="709" transform="rotate(28 503 709)" font-size="10" fill="#8e8e8e" font-weight="normal" text-anchor="middle" dominant-baseline="middle" stroke="#f2f2f0" stroke-width="2.2" stroke-opacity=".85" paint-order="stroke">E 3rd St</text>
<text x="462" y="715" transform="rotate(28 462 715)" font-size="10" fill="#8e8e8e" font-weight="normal" text-anchor="middle" dominant-baseline="middle" stroke="#f2f2f0" stroke-width="2.2" stroke-opacity=".85" paint-order="stroke">E 2nd St</text>
<text x="474" y="746" transform="rotate(28 474 746)" font-size="10" fill="#8e8e8e" font-weight="normal" text-anchor="middle" dominant-baseline="middle" stroke="#f2f2f0" stroke-width="2.2" stroke-opacity=".85" paint-order="stroke">E 1st St</text>
<text x="629" y="658" transform="rotate(28 629 658)" font-size="10" fill="#8e8e8e" font-weight="normal" text-anchor="middle" dominant-baseline="middle" stroke="#f2f2f0" stroke-width="2.2" stroke-opacity=".85" paint-order="stroke">St Marks Pl</text>
<text x="606" y="692" transform="rotate(28 606 692)" font-size="10" fill="#8e8e8e" font-weight="normal" text-anchor="middle" dominant-baseline="middle" stroke="#f2f2f0" stroke-width="2.2" stroke-opacity=".85" paint-order="stroke">E 6th St</text>
<text x="672" y="706" transform="rotate(28 672 706)" font-size="10" fill="#8e8e8e" font-weight="normal" text-anchor="middle" dominant-baseline="middle" stroke="#f2f2f0" stroke-width="2.2" stroke-opacity=".85" paint-order="stroke">E 7th St</text>
<text x="587" y="732" transform="rotate(28 587 732)" font-size="10" fill="#8e8e8e" font-weight="normal" text-anchor="middle" dominant-baseline="middle" stroke="#f2f2f0" stroke-width="2.2" stroke-opacity=".85" paint-order="stroke">E 4th St</text>
<text x="632" y="807" transform="rotate(28 632 807)" font-size="10" fill="#8e8e8e" font-weight="normal" text-anchor="middle" dominant-baseline="middle" stroke="#f2f2f0" stroke-width="2.2" stroke-opacity=".85" paint-order="stroke">E 2nd</text>
<text x="622" y="733" transform="rotate(-62 622 733)" font-size="10" fill="#8e8e8e" font-weight="normal" text-anchor="middle" dominant-baseline="middle" stroke="#f2f2f0" stroke-width="2.2" stroke-opacity=".85" paint-order="stroke">Avenue A</text>
<text x="668" y="776" transform="rotate(-62 668 776)" font-size="10" fill="#8e8e8e" font-weight="normal" text-anchor="middle" dominant-baseline="middle" stroke="#f2f2f0" stroke-width="2.2" stroke-opacity=".85" paint-order="stroke">Avenue B</text>
<text x="74" y="321" transform="rotate(0 74 321)" font-size="10" fill="#8e8e8e" font-weight="normal" text-anchor="middle" dominant-baseline="middle" stroke="#f2f2f0" stroke-width="2.2" stroke-opacity=".85" paint-order="stroke">Jane St</text>
<text x="153" y="363" transform="rotate(-8 153 363)" font-size="10" fill="#8e8e8e" font-weight="normal" text-anchor="middle" dominant-baseline="middle" stroke="#f2f2f0" stroke-width="2.2" stroke-opacity=".85" paint-order="stroke">Bank St</text>
<text x="189" y="359" transform="rotate(-10 189 359)" font-size="10" fill="#8e8e8e" font-weight="normal" text-anchor="middle" dominant-baseline="middle" stroke="#f2f2f0" stroke-width="2.2" stroke-opacity=".85" paint-order="stroke">Bank St</text>
<text x="104" y="397" transform="rotate(-8 104 397)" font-size="10" fill="#8e8e8e" font-weight="normal" text-anchor="middle" dominant-baseline="middle" stroke="#f2f2f0" stroke-width="2.2" stroke-opacity=".85" paint-order="stroke">W 11th St</text>
<text x="213" y="397" transform="rotate(-8 213 397)" font-size="10" fill="#8e8e8e" font-weight="normal" text-anchor="middle" dominant-baseline="middle" stroke="#f2f2f0" stroke-width="2.2" stroke-opacity=".85" paint-order="stroke">Perry St</text>
<text x="107" y="437" transform="rotate(-8 107 437)" font-size="10" fill="#8e8e8e" font-weight="normal" text-anchor="middle" dominant-baseline="middle" stroke="#f2f2f0" stroke-width="2.2" stroke-opacity=".85" paint-order="stroke">Charles St</text>
<text x="55" y="491" transform="rotate(-12 55 491)" font-size="10" fill="#8e8e8e" font-weight="normal" text-anchor="middle" dominant-baseline="middle" stroke="#f2f2f0" stroke-width="2.2" stroke-opacity=".85" paint-order="stroke">Christopher St</text>
<text x="150" y="488" transform="rotate(-20 150 488)" font-size="10" fill="#8e8e8e" font-weight="normal" text-anchor="middle" dominant-baseline="middle" stroke="#f2f2f0" stroke-width="2.2" stroke-opacity=".85" paint-order="stroke">Grove St</text>
<text x="66" y="400" transform="rotate(-85 66 400)" font-size="10" fill="#8e8e8e" font-weight="normal" text-anchor="middle" dominant-baseline="middle" stroke="#f2f2f0" stroke-width="2.2" stroke-opacity=".85" paint-order="stroke">Washington St</text>
<text x="55" y="690" transform="rotate(-85 55 690)" font-size="10" fill="#8e8e8e" font-weight="normal" text-anchor="middle" dominant-baseline="middle" stroke="#f2f2f0" stroke-width="2.2" stroke-opacity=".85" paint-order="stroke">Greenwich St</text>
<text x="113" y="680" transform="rotate(6 113 680)" font-size="10" fill="#8e8e8e" font-weight="normal" text-anchor="middle" dominant-baseline="middle" stroke="#f2f2f0" stroke-width="2.2" stroke-opacity=".85" paint-order="stroke">Vandam St</text>
<text x="117" y="703" transform="rotate(6 117 703)" font-size="10" fill="#8e8e8e" font-weight="normal" text-anchor="middle" dominant-baseline="middle" stroke="#f2f2f0" stroke-width="2.2" stroke-opacity=".85" paint-order="stroke">Spring St</text>
<text x="320" y="563" transform="rotate(28 320 563)" font-size="10" fill="#8e8e8e" font-weight="normal" text-anchor="middle" dominant-baseline="middle" stroke="#f2f2f0" stroke-width="2.2" stroke-opacity=".85" paint-order="stroke">Washington Sq S</text>
<text x="338" y="610" transform="rotate(28 338 610)" font-size="10" fill="#8e8e8e" font-weight="normal" text-anchor="middle" dominant-baseline="middle" stroke="#f2f2f0" stroke-width="2.2" stroke-opacity=".85" paint-order="stroke">W 3rd St</text>
<text x="365" y="604" transform="rotate(28 365 604)" font-size="10" fill="#8e8e8e" font-weight="normal" text-anchor="middle" dominant-baseline="middle" stroke="#f2f2f0" stroke-width="2.2" stroke-opacity=".85" paint-order="stroke">W 4th St</text>
<text x="382" y="579" transform="rotate(-62 382 579)" font-size="10" fill="#8e8e8e" font-weight="normal" text-anchor="middle" dominant-baseline="middle" stroke="#f2f2f0" stroke-width="2.2" stroke-opacity=".85" paint-order="stroke">Greene St</text>
<text x="221" y="657" transform="rotate(-62 221 657)" font-size="10" fill="#8e8e8e" font-weight="normal" text-anchor="middle" dominant-baseline="middle" stroke="#f2f2f0" stroke-width="2.2" stroke-opacity=".85" paint-order="stroke">Sullivan</text>
<text x="276" y="724" transform="rotate(28 276 724)" font-size="10" fill="#8e8e8e" font-weight="normal" text-anchor="middle" dominant-baseline="middle" stroke="#f2f2f0" stroke-width="2.2" stroke-opacity=".85" paint-order="stroke">Prince St</text>
<text x="314" y="799" transform="rotate(28 314 799)" font-size="10" fill="#8e8e8e" font-weight="normal" text-anchor="middle" dominant-baseline="middle" stroke="#f2f2f0" stroke-width="2.2" stroke-opacity=".85" paint-order="stroke">Spring St</text>
<text x="340" y="667" transform="rotate(-62 340 667)" font-size="10" fill="#8e8e8e" font-weight="normal" text-anchor="middle" dominant-baseline="middle" stroke="#f2f2f0" stroke-width="2.2" stroke-opacity=".85" paint-order="stroke">Mercer St</text>
<text x="245" y="775" transform="rotate(-62 245 775)" font-size="10" fill="#8e8e8e" font-weight="normal" text-anchor="middle" dominant-baseline="middle" stroke="#f2f2f0" stroke-width="2.2" stroke-opacity=".85" paint-order="stroke">Greene St</text>
<text x="185" y="818" transform="rotate(-62 185 818)" font-size="10" fill="#8e8e8e" font-weight="normal" text-anchor="middle" dominant-baseline="middle" stroke="#f2f2f0" stroke-width="2.2" stroke-opacity=".85" paint-order="stroke">Wooster St</text>
<text x="222" y="336" transform="rotate(62 222 336)" font-size="10" fill="#8e8e8e" font-weight="normal" text-anchor="middle" dominant-baseline="middle" stroke="#f2f2f0" stroke-width="2.2" stroke-opacity=".85" paint-order="stroke">Greenwich Ave</text>
<text x="95" y="239" transform="rotate(0 95 239)" font-size="8.5" fill="#999" font-weight="bold" text-anchor="middle" dominant-baseline="middle" stroke="#f2f2f0" stroke-width="2.2" stroke-opacity=".85" paint-order="stroke">MEATPACKING</text>
<text x="102" y="252" transform="rotate(0 102 252)" font-size="8.5" fill="#999" font-weight="bold" text-anchor="middle" dominant-baseline="middle" stroke="#f2f2f0" stroke-width="2.2" stroke-opacity=".85" paint-order="stroke">DISTRICT</text>
<text x="486" y="279" transform="rotate(0 486 279)" font-size="8.5" fill="#999" font-weight="bold" text-anchor="middle" dominant-baseline="middle" stroke="#f2f2f0" stroke-width="2.2" stroke-opacity=".85" paint-order="stroke">FLATIRON</text>
<text x="486" y="289" transform="rotate(0 486 289)" font-size="8.5" fill="#999" font-weight="bold" text-anchor="middle" dominant-baseline="middle" stroke="#f2f2f0" stroke-width="2.2" stroke-opacity=".85" paint-order="stroke">DISTRICT</text>
<text x="620" y="360" transform="rotate(0 620 360)" font-size="8.5" fill="#999" font-weight="bold" text-anchor="middle" dominant-baseline="middle" stroke="#f2f2f0" stroke-width="2.2" stroke-opacity=".85" paint-order="stroke">GRAMERCY PARK</text>
<text x="371" y="781" transform="rotate(0 371 781)" font-size="8" fill="#999" font-weight="bold" text-anchor="middle" dominant-baseline="middle" stroke="#f2f2f0" stroke-width="2.2" stroke-opacity=".85" paint-order="stroke">NOLITA</text>
<text x="541" y="186" transform="rotate(0 541 186)" font-size="10" fill="#777" font-weight="normal" text-anchor="middle" dominant-baseline="middle" stroke="#f2f2f0" stroke-width="2.2" stroke-opacity=".85" paint-order="stroke">Madison</text>
<text x="541" y="198" transform="rotate(0 541 198)" font-size="10" fill="#777" font-weight="normal" text-anchor="middle" dominant-baseline="middle" stroke="#f2f2f0" stroke-width="2.2" stroke-opacity=".85" paint-order="stroke">Square</text>
<text x="541" y="209" transform="rotate(0 541 209)" font-size="10" fill="#777" font-weight="normal" text-anchor="middle" dominant-baseline="middle" stroke="#f2f2f0" stroke-width="2.2" stroke-opacity=".85" paint-order="stroke">Park</text>
<text x="323" y="529" transform="rotate(0 323 529)" font-size="10" fill="#777" font-weight="normal" text-anchor="middle" dominant-baseline="middle" stroke="#f2f2f0" stroke-width="2.2" stroke-opacity=".85" paint-order="stroke">Washington</text>
<text x="323" y="541" transform="rotate(0 323 541)" font-size="10" fill="#777" font-weight="normal" text-anchor="middle" dominant-baseline="middle" stroke="#f2f2f0" stroke-width="2.2" stroke-opacity=".85" paint-order="stroke">Square</text>
<text x="323" y="554" transform="rotate(0 323 554)" font-size="10" fill="#777" font-weight="normal" text-anchor="middle" dominant-baseline="middle" stroke="#f2f2f0" stroke-width="2.2" stroke-opacity=".85" paint-order="stroke">Park</text>
<text x="633" y="455" transform="rotate(0 633 455)" font-size="10" fill="#777" font-weight="normal" text-anchor="middle" dominant-baseline="middle" stroke="#f2f2f0" stroke-width="2.2" stroke-opacity=".85" paint-order="stroke">Stuyvesant</text>
<text x="633" y="466" transform="rotate(0 633 466)" font-size="10" fill="#777" font-weight="normal" text-anchor="middle" dominant-baseline="middle" stroke="#f2f2f0" stroke-width="2.2" stroke-opacity=".85" paint-order="stroke">Square</text>
<text x="680" y="673" transform="rotate(0 680 673)" font-size="10" fill="#777" font-weight="normal" text-anchor="middle" dominant-baseline="middle" stroke="#f2f2f0" stroke-width="2.2" stroke-opacity=".85" paint-order="stroke">Tompkins</text>
<text x="680" y="686" transform="rotate(0 680 686)" font-size="10" fill="#777" font-weight="normal" text-anchor="middle" dominant-baseline="middle" stroke="#f2f2f0" stroke-width="2.2" stroke-opacity=".85" paint-order="stroke">Square</text>
<text x="111" y="566" transform="rotate(0 111 566)" font-size="10" fill="#777" font-weight="normal" text-anchor="middle" dominant-baseline="middle" stroke="#f2f2f0" stroke-width="2.2" stroke-opacity=".85" paint-order="stroke">James J</text>
<text x="111" y="577" transform="rotate(0 111 577)" font-size="10" fill="#777" font-weight="normal" text-anchor="middle" dominant-baseline="middle" stroke="#f2f2f0" stroke-width="2.2" stroke-opacity=".85" paint-order="stroke">Walker</text>
<text x="111" y="589" transform="rotate(0 111 589)" font-size="10" fill="#777" font-weight="normal" text-anchor="middle" dominant-baseline="middle" stroke="#f2f2f0" stroke-width="2.2" stroke-opacity=".85" paint-order="stroke">Park</text>
<text x="10" y="470" transform="rotate(-90 10 470)" font-size="9" fill="#777" font-weight="normal" text-anchor="middle" dominant-baseline="middle" stroke="#f2f2f0" stroke-width="2.2" stroke-opacity=".85" paint-order="stroke">Hudson River Park</text>
<text x="474" y="580" transform="rotate(0 474 580)" font-size="10" fill="#999" font-weight="normal" text-anchor="middle" dominant-baseline="middle" stroke="#f2f2f0" stroke-width="2.2" stroke-opacity=".85" paint-order="stroke">NoHo</text>
</g>
<rect x="18" y="401" width="21" height="16" rx="4" fill="#fff" stroke="#999" stroke-width="1"/><text x="28.5" y="413" font-size="10" text-anchor="middle" fill="#555" font-family="Liberation Sans, sans-serif">9A</text>
<polygon points="269.0,291.0 420.0,375.0 557.0,457.0 494.0,581.0 437.0,567.0 402.0,570.0 368.0,620.0 320.0,699.0 263.0,663.0 238.0,646.0 215.0,629.0 200.0,621.0 176.0,620.0 140.0,605.0 142.0,578.0 170.0,511.0 194.0,459.0 201.0,440.0 224.0,376.0" fill="none" stroke="#4a90e2" stroke-width="2.6" stroke-linejoin="round"/>
<g font-family="Liberation Sans, sans-serif" font-weight="bold">
<rect x="262.8" y="345.9" width="25.9" height="15.5" rx="2.5" fill="#b9b6b0" opacity=".6"/>
<rect x="262.8" y="344.8" width="25.9" height="15.5" rx="2.5" fill="#f7f5f1"/>
<text x="275.8" y="357.1" font-size="12.5" fill="#505050" text-anchor="middle">$1.5M</text>
<rect x="280.0" y="358.4" width="41.0" height="15.5" rx="2.5" fill="#b9b6b0" opacity=".6"/>
<rect x="280.0" y="357.2" width="41.0" height="15.5" rx="2.5" fill="#f7f5f1"/>
<text x="300.5" y="369.6" font-size="12.5" fill="#505050" text-anchor="middle">$1.41M</text>
<rect x="288.7" y="375.6" width="36.8" height="15.5" rx="2.5" fill="#b9b6b0" opacity=".6"/>
<rect x="288.7" y="374.4" width="36.8" height="15.5" rx="2.5" fill="#f7f5f1"/>
<text x="307.1" y="386.8" font-size="12.5" fill="#505050" text-anchor="middle">$1.9M</text>
<rect x="238.0" y="382.1" width="20.4" height="15.5" rx="2.5" fill="#b9b6b0" opacity=".6"/>
<rect x="238.0" y="380.9" width="20.4" height="15.5" rx="2.5" fill="#f7f5f1"/>
<text x="248.2" y="393.3" font-size="12.5" fill="#505050" text-anchor="middle">5</text>
<rect x="355.8" y="385.4" width="35.7" height="15.5" rx="2.5" fill="#b9b6b0" opacity=".6"/>
<rect x="355.8" y="384.2" width="35.7" height="15.5" rx="2.5" fill="#f7f5f1"/>
<text x="373.6" y="396.6" font-size="12.5" fill="#505050" text-anchor="middle">$999K</text>
<rect x="288.7" y="385.4" width="39.0" height="15.5" rx="2.5" fill="#b9b6b0" opacity=".6"/>
<rect x="288.7" y="384.2" width="39.0" height="15.5" rx="2.5" fill="#f7f5f1"/>
<text x="308.2" y="396.6" font-size="12.5" fill="#505050" text-anchor="middle">$965K</text>
<rect x="354.7" y="397.9" width="44.3" height="15.5" rx="2.5" fill="#b9b6b0" opacity=".6"/>
<rect x="354.7" y="396.8" width="44.3" height="15.5" rx="2.5" fill="#f7f5f1"/>
<text x="376.9" y="409.1" font-size="12.5" fill="#505050" text-anchor="middle">2 units</text>
<rect x="302.8" y="396.8" width="31.2" height="15.5" rx="2.5" fill="#b9b6b0" opacity=".6"/>
<rect x="302.8" y="395.6" width="31.2" height="15.5" rx="2.5" fill="#f7f5f1"/>
<text x="318.4" y="407.9" font-size="12.5" fill="#505050" text-anchor="middle">$985K</text>
<rect x="419.7" y="402.4" width="38.3" height="15.5" rx="2.5" fill="#b9b6b0" opacity=".6"/>
<rect x="419.7" y="401.2" width="38.3" height="15.5" rx="2.5" fill="#f7f5f1"/>
<text x="438.9" y="413.6" font-size="12.5" fill="#505050" text-anchor="middle">$999K</text>
<rect x="347.0" y="421.6" width="44.5" height="15.5" rx="2.5" fill="#b9b6b0" opacity=".6"/>
<rect x="347.0" y="420.4" width="44.5" height="15.5" rx="2.5" fill="#f7f5f1"/>
<text x="369.2" y="432.8" font-size="12.5" fill="#505050" text-anchor="middle">$28.5M</text>
<rect x="237.9" y="426.4" width="37.8" height="15.5" rx="2.5" fill="#b9b6b0" opacity=".6"/>
<rect x="237.9" y="425.2" width="37.8" height="15.5" rx="2.5" fill="#f7f5f1"/>
<text x="256.8" y="437.6" font-size="12.5" fill="#505050" text-anchor="middle">$999K</text>
<rect x="390.4" y="436.0" width="42.5" height="15.5" rx="2.5" fill="#b9b6b0" opacity=".6"/>
<rect x="390.4" y="434.8" width="42.5" height="15.5" rx="2.5" fill="#f7f5f1"/>
<text x="411.6" y="447.1" font-size="12.5" fill="#505050" text-anchor="middle">2 units</text>
<rect x="493.8" y="445.4" width="34.2" height="15.5" rx="2.5" fill="#b9b6b0" opacity=".6"/>
<rect x="493.8" y="444.2" width="34.2" height="15.5" rx="2.5" fill="#f7f5f1"/>
<text x="510.9" y="456.6" font-size="12.5" fill="#505050" text-anchor="middle">$2.6M</text>
<rect x="237.9" y="443.2" width="22.7" height="15.5" rx="2.5" fill="#b9b6b0" opacity=".6"/>
<rect x="237.9" y="442.1" width="22.7" height="15.5" rx="2.5" fill="#f7f5f1"/>
<text x="249.2" y="454.4" font-size="12.5" fill="#505050" text-anchor="middle">$1M</text>
<rect x="366.6" y="454.9" width="36.8" height="15.5" rx="2.5" fill="#b9b6b0" opacity=".6"/>
<rect x="366.6" y="453.8" width="36.8" height="15.5" rx="2.5" fill="#f7f5f1"/>
<text x="385.0" y="466.1" font-size="12.5" fill="#505050" text-anchor="middle">2 units</text>
<rect x="203.3" y="461.0" width="34.6" height="15.5" rx="2.5" fill="#b9b6b0" opacity=".6"/>
<rect x="203.3" y="459.8" width="34.6" height="15.5" rx="2.5" fill="#f7f5f1"/>
<text x="220.6" y="472.2" font-size="12.5" fill="#505050" text-anchor="middle">$2.1M</text>
<rect x="312.5" y="471.8" width="21.5" height="15.5" rx="2.5" fill="#b9b6b0" opacity=".6"/>
<rect x="312.5" y="470.6" width="21.5" height="15.5" rx="2.5" fill="#f7f5f1"/>
<text x="323.2" y="483.0" font-size="12.5" fill="#505050" text-anchor="middle">935K</text>
<rect x="222.7" y="475.1" width="43.3" height="15.5" rx="2.5" fill="#b9b6b0" opacity=".6"/>
<rect x="222.7" y="473.9" width="43.3" height="15.5" rx="2.5" fill="#f7f5f1"/>
<text x="244.3" y="486.2" font-size="12.5" fill="#505050" text-anchor="middle">$10.2M</text>
<rect x="481.9" y="478.6" width="30.4" height="15.5" rx="2.5" fill="#b9b6b0" opacity=".6"/>
<rect x="481.9" y="477.4" width="30.4" height="15.5" rx="2.5" fill="#f7f5f1"/>
<text x="497.1" y="489.7" font-size="12.5" fill="#505050" text-anchor="middle">5M a</text>
<rect x="375.0" y="468.9" width="28.0" height="15.5" rx="2.5" fill="#b9b6b0" opacity=".6"/>
<rect x="375.0" y="467.8" width="28.0" height="15.5" rx="2.5" fill="#f7f5f1"/>
<text x="389.0" y="480.1" font-size="12.5" fill="#505050" text-anchor="middle">19M</text>
<rect x="314.7" y="491.3" width="43.3" height="15.5" rx="2.5" fill="#b9b6b0" opacity=".6"/>
<rect x="314.7" y="490.1" width="43.3" height="15.5" rx="2.5" fill="#f7f5f1"/>
<text x="336.4" y="502.5" font-size="12.5" fill="#505050" text-anchor="middle">$1.03M</text>
<rect x="439.5" y="493.1" width="22.5" height="15.5" rx="2.5" fill="#b9b6b0" opacity=".6"/>
<rect x="439.5" y="491.9" width="22.5" height="15.5" rx="2.5" fill="#f7f5f1"/>
<text x="450.8" y="504.2" font-size="12.5" fill="#505050" text-anchor="middle">5K</text>
<rect x="221.7" y="492.4" width="32.3" height="15.5" rx="2.5" fill="#b9b6b0" opacity=".6"/>
<rect x="221.7" y="491.2" width="32.3" height="15.5" rx="2.5" fill="#f7f5f1"/>
<text x="237.8" y="503.6" font-size="12.5" fill="#505050" text-anchor="middle">$6.5M</text>
<rect x="524.2" y="501.7" width="25.1" height="15.5" rx="2.5" fill="#b9b6b0" opacity=".6"/>
<rect x="524.2" y="500.5" width="25.1" height="15.5" rx="2.5" fill="#f7f5f1"/>
<text x="536.8" y="512.9" font-size="12.5" fill="#505050" text-anchor="middle">31M</text>
<rect x="436.9" y="509.6" width="23.8" height="15.5" rx="2.5" fill="#b9b6b0" opacity=".6"/>
<rect x="436.9" y="508.4" width="23.8" height="15.5" rx="2.5" fill="#f7f5f1"/>
<text x="448.8" y="520.8" font-size="12.5" fill="#505050" text-anchor="middle">8K</text>
<rect x="194.6" y="514.0" width="29.2" height="15.5" rx="2.5" fill="#b9b6b0" opacity=".6"/>
<rect x="194.6" y="512.8" width="29.2" height="15.5" rx="2.5" fill="#f7f5f1"/>
<text x="209.2" y="525.1" font-size="12.5" fill="#505050" text-anchor="middle">$645</text>
<rect x="310.0" y="521.0" width="24.0" height="15.5" rx="2.5" fill="#b9b6b0" opacity=".6"/>
<rect x="310.0" y="519.8" width="24.0" height="15.5" rx="2.5" fill="#f7f5f1"/>
<text x="322.0" y="532.1" font-size="12.5" fill="#505050" text-anchor="middle">$7</text>
<rect x="423.7" y="532.8" width="38.3" height="15.5" rx="2.5" fill="#b9b6b0" opacity=".6"/>
<rect x="423.7" y="531.5" width="38.3" height="15.5" rx="2.5" fill="#f7f5f1"/>
<text x="442.9" y="543.9" font-size="12.5" fill="#505050" text-anchor="middle">2 un</text>
<rect x="417.0" y="526.1" width="34.4" height="15.5" rx="2.5" fill="#b9b6b0" opacity=".6"/>
<rect x="417.0" y="524.9" width="34.4" height="15.5" rx="2.5" fill="#f7f5f1"/>
<text x="434.2" y="537.2" font-size="12.5" fill="#505050" text-anchor="middle">$1.6M</text>
<rect x="380.0" y="530.1" width="34.4" height="15.5" rx="2.5" fill="#b9b6b0" opacity=".6"/>
<rect x="380.0" y="528.9" width="34.4" height="15.5" rx="2.5" fill="#f7f5f1"/>
<text x="397.2" y="541.2" font-size="12.5" fill="#505050" text-anchor="middle">$87</text>
<rect x="435.6" y="548.6" width="23.8" height="15.5" rx="2.5" fill="#b9b6b0" opacity=".6"/>
<rect x="435.6" y="547.4" width="23.8" height="15.5" rx="2.5" fill="#f7f5f1"/>
<text x="447.5" y="559.7" font-size="12.5" fill="#505050" text-anchor="middle">$2</text>
<rect x="467.3" y="560.6" width="37.0" height="15.5" rx="2.5" fill="#b9b6b0" opacity=".6"/>
<rect x="467.3" y="559.4" width="37.0" height="15.5" rx="2.5" fill="#f7f5f1"/>
<text x="485.8" y="571.7" font-size="12.5" fill="#505050" text-anchor="middle">$2.2M</text>
<rect x="183.8" y="600.8" width="26.0" height="15.5" rx="2.5" fill="#b9b6b0" opacity=".6"/>
<rect x="183.8" y="599.5" width="26.0" height="15.5" rx="2.5" fill="#f7f5f1"/>
<text x="196.8" y="611.9" font-size="12.5" fill="#505050" text-anchor="middle">.5M</text>
<rect x="245.5" y="604.6" width="30.2" height="15.5" rx="2.5" fill="#b9b6b0" opacity=".6"/>
<rect x="245.5" y="603.4" width="30.2" height="15.5" rx="2.5" fill="#f7f5f1"/>
<text x="260.6" y="615.7" font-size="12.5" fill="#505050" text-anchor="middle">$2</text>
<rect x="128.7" y="607.3" width="47.5" height="15.5" rx="2.5" fill="#b9b6b0" opacity=".6"/>
<rect x="128.7" y="606.1" width="47.5" height="15.5" rx="2.5" fill="#f7f5f1"/>
<text x="152.4" y="618.5" font-size="12.5" fill="#505050" text-anchor="middle">$3.8M</text>
<rect x="133.0" y="618.1" width="40.0" height="15.5" rx="2.5" fill="#b9b6b0" opacity=".6"/>
<rect x="133.0" y="616.9" width="40.0" height="15.5" rx="2.5" fill="#f7f5f1"/>
<text x="153.0" y="629.3" font-size="12.5" fill="#505050" text-anchor="middle">$3.8M</text>
<rect x="278.0" y="622.5" width="42.0" height="15.5" rx="2.5" fill="#b9b6b0" opacity=".6"/>
<rect x="278.0" y="621.2" width="42.0" height="15.5" rx="2.5" fill="#f7f5f1"/>
<text x="299.0" y="633.6" font-size="12.5" fill="#505050" text-anchor="middle">$3.10M</text>
<circle cx="282.7" cy="304.9" r="6.8" fill="#d0021b" stroke="#fff" stroke-width="1.6"/><text x="282.7" y="309.2" font-size="11.5" fill="#fff" text-anchor="middle">2</text>
<rect x="257.4" y="315.1" width="49.7" height="15.5" rx="2.5" fill="#b9b6b0" opacity=".6"/>
<rect x="257.4" y="313.9" width="49.7" height="15.5" rx="2.5" fill="#f7f5f1"/>
<text x="282.2" y="326.2" font-size="12.5" fill="#505050" text-anchor="middle">2 units</text>
<circle cx="272.9" cy="336.7" r="6.4" fill="#d0021b" stroke="#fff" stroke-width="1.6"/>
<circle cx="258.4" cy="342.7" r="6.4" fill="#d0021b" stroke="#fff" stroke-width="1.6"/>
<rect x="235.7" y="353.5" width="45.5" height="15.5" rx="2.5" fill="#b9b6b0" opacity=".6"/>
<rect x="235.7" y="352.3" width="45.5" height="15.5" rx="2.5" fill="#f7f5f1"/>
<text x="258.4" y="364.7" font-size="12.5" fill="#505050" text-anchor="middle">$1.82M</text>
<circle cx="297.4" cy="343.8" r="6.4" fill="#d0021b" stroke="#fff" stroke-width="1.6"/>
<circle cx="294.8" cy="348.8" r="6.4" fill="#d0021b" stroke="#fff" stroke-width="1.6"/>
<circle cx="336.7" cy="361.8" r="6.4" fill="#d0021b" stroke="#fff" stroke-width="1.6"/>
<rect x="324.4" y="373.4" width="33.5" height="15.5" rx="2.5" fill="#b9b6b0" opacity=".6"/>
<rect x="324.4" y="372.2" width="33.5" height="15.5" rx="2.5" fill="#f7f5f1"/>
<text x="341.1" y="384.6" font-size="12.5" fill="#505050" text-anchor="middle">3.1M</text>
<circle cx="305" cy="363.3" r="6.4" fill="#d0021b" stroke="#fff" stroke-width="1.6"/>
<circle cx="279" cy="368.7" r="6.8" fill="#d0021b" stroke="#fff" stroke-width="1.6"/><text x="279" y="373.0" font-size="11.5" fill="#fff" text-anchor="middle">3</text>
<rect x="253.0" y="379.4" width="49.8" height="15.5" rx="2.5" fill="#b9b6b0" opacity=".6"/>
<rect x="253.0" y="378.2" width="49.8" height="15.5" rx="2.5" fill="#f7f5f1"/>
<text x="277.9" y="390.6" font-size="12.5" fill="#505050" text-anchor="middle">3 units</text>
<circle cx="262.8" cy="371.9" r="6.8" fill="#d0021b" stroke="#fff" stroke-width="1.6"/><text x="262.8" y="376.2" font-size="11.5" fill="#fff" text-anchor="middle">5</text>
<circle cx="372" cy="374" r="6.4" fill="#d0021b" stroke="#fff" stroke-width="1.6"/>
<circle cx="419.7" cy="379.3" r="6.4" fill="#d0021b" stroke="#fff" stroke-width="1.6"/>
<circle cx="417.4" cy="381.7" r="6.4" fill="#d0021b" stroke="#fff" stroke-width="1.6"/>
<circle cx="422.3" cy="384.6" r="6.4" fill="#d0021b" stroke="#fff" stroke-width="1.6"/>
<rect x="401.2" y="395.1" width="43.6" height="15.5" rx="2.5" fill="#b9b6b0" opacity=".6"/>
<rect x="401.2" y="393.9" width="43.6" height="15.5" rx="2.5" fill="#f7f5f1"/>
<text x="423.0" y="406.3" font-size="12.5" fill="#505050" text-anchor="middle">$2.23M</text>
<circle cx="377" cy="388.2" r="6.8" fill="#d0021b" stroke="#fff" stroke-width="1.6"/><text x="377" y="392.5" font-size="11.5" fill="#fff" text-anchor="middle">2</text>
<circle cx="355.8" cy="390.3" r="6.4" fill="#d0021b" stroke="#fff" stroke-width="1.6"/>
<circle cx="436.9" cy="391.2" r="6.4" fill="#d0021b" stroke="#fff" stroke-width="1.6"/>
<circle cx="338.5" cy="394.6" r="6.4" fill="#d0021b" stroke="#fff" stroke-width="1.6"/>
<circle cx="271.4" cy="399" r="6.4" fill="#d0021b" stroke="#fff" stroke-width="1.6"/>
<rect x="253.0" y="408.1" width="40.0" height="15.5" rx="2.5" fill="#b9b6b0" opacity=".6"/>
<rect x="253.0" y="406.9" width="40.0" height="15.5" rx="2.5" fill="#f7f5f1"/>
<text x="273.0" y="419.2" font-size="12.5" fill="#505050" text-anchor="middle">$1.41M</text>
<circle cx="364.4" cy="400" r="6.8" fill="#d0021b" stroke="#fff" stroke-width="1.6"/><text x="364.4" y="404.3" font-size="11.5" fill="#fff" text-anchor="middle">2</text>
<rect x="340.6" y="410.2" width="48.7" height="15.5" rx="2.5" fill="#b9b6b0" opacity=".6"/>
<rect x="340.6" y="409.1" width="48.7" height="15.5" rx="2.5" fill="#f7f5f1"/>
<text x="365.0" y="421.4" font-size="12.5" fill="#505050" text-anchor="middle">2 units</text>
<circle cx="349.3" cy="402.2" r="6.4" fill="#d0021b" stroke="#fff" stroke-width="1.6"/>
<circle cx="239" cy="405" r="6.4" fill="#d0021b" stroke="#fff" stroke-width="1.6"/>
<circle cx="336.3" cy="407.2" r="6.4" fill="#d0021b" stroke="#fff" stroke-width="1.6"/>
<circle cx="234" cy="409.1" r="6.8" fill="#d0021b" stroke="#fff" stroke-width="1.6"/><text x="234" y="413.40000000000003" font-size="11.5" fill="#fff" text-anchor="middle">2</text>
<rect x="210.8" y="420.0" width="44.4" height="15.5" rx="2.5" fill="#b9b6b0" opacity=".6"/>
<rect x="210.8" y="418.8" width="44.4" height="15.5" rx="2.5" fill="#f7f5f1"/>
<text x="233.0" y="431.2" font-size="12.5" fill="#505050" text-anchor="middle">2 units</text>
<circle cx="255.2" cy="416.3" r="6.4" fill="#d0021b" stroke="#fff" stroke-width="1.6"/>
<circle cx="413.5" cy="425" r="6.8" fill="#d0021b" stroke="#fff" stroke-width="1.6"/><text x="413.5" y="429.3" font-size="11.5" fill="#fff" text-anchor="middle">2</text>
<circle cx="318" cy="430.8" r="6.8" fill="#d0021b" stroke="#fff" stroke-width="1.6"/><text x="318" y="435.1" font-size="11.5" fill="#fff" text-anchor="middle">2</text>
<rect x="294.0" y="440.6" width="48.8" height="15.5" rx="2.5" fill="#b9b6b0" opacity=".6"/>
<rect x="294.0" y="439.4" width="48.8" height="15.5" rx="2.5" fill="#f7f5f1"/>
<text x="318.4" y="451.7" font-size="12.5" fill="#505050" text-anchor="middle">2 units</text>
<circle cx="513.6" cy="433.5" r="6.4" fill="#d0021b" stroke="#fff" stroke-width="1.6"/>
<circle cx="248.7" cy="433.6" r="6.4" fill="#d0021b" stroke="#fff" stroke-width="1.6"/>
<circle cx="213.4" cy="434" r="6.8" fill="#d0021b" stroke="#fff" stroke-width="1.6"/><text x="213.4" y="438.3" font-size="11.5" fill="#fff" text-anchor="middle">2</text>
<rect x="189.0" y="445.4" width="45.6" height="15.5" rx="2.5" fill="#b9b6b0" opacity=".6"/>
<rect x="189.0" y="444.2" width="45.6" height="15.5" rx="2.5" fill="#f7f5f1"/>
<text x="211.8" y="456.6" font-size="12.5" fill="#505050" text-anchor="middle">2 units</text>
<circle cx="427.6" cy="440.1" r="6.8" fill="#d0021b" stroke="#fff" stroke-width="1.6"/><text x="427.6" y="444.40000000000003" font-size="11.5" fill="#fff" text-anchor="middle">9</text>
<rect x="403.8" y="450.7" width="49.0" height="15.5" rx="2.5" fill="#b9b6b0" opacity=".6"/>
<rect x="403.8" y="449.5" width="49.0" height="15.5" rx="2.5" fill="#f7f5f1"/>
<text x="428.3" y="461.9" font-size="12.5" fill="#505050" text-anchor="middle">9 units</text>
<circle cx="386.6" cy="444" r="6.4" fill="#d0021b" stroke="#fff" stroke-width="1.6"/>
<circle cx="524.2" cy="446.7" r="6.8" fill="#d0021b" stroke="#fff" stroke-width="1.6"/><text x="524.2" y="451.0" font-size="11.5" fill="#fff" text-anchor="middle">2</text>
<rect x="500.4" y="457.4" width="48.9" height="15.5" rx="2.5" fill="#b9b6b0" opacity=".6"/>
<rect x="500.4" y="456.2" width="48.9" height="15.5" rx="2.5" fill="#f7f5f1"/>
<text x="524.8" y="468.6" font-size="12.5" fill="#505050" text-anchor="middle">2 units</text>
<circle cx="257.8" cy="454.1" r="6.4" fill="#d0021b" stroke="#fff" stroke-width="1.6"/>
<rect x="237.9" y="465.9" width="41.1" height="15.5" rx="2.5" fill="#b9b6b0" opacity=".6"/>
<rect x="237.9" y="464.7" width="41.1" height="15.5" rx="2.5" fill="#f7f5f1"/>
<text x="258.4" y="477.1" font-size="12.5" fill="#505050" text-anchor="middle">$890K</text>
<circle cx="454" cy="456" r="6.8" fill="#d0021b" stroke="#fff" stroke-width="1.6"/><text x="454" y="460.3" font-size="11.5" fill="#fff" text-anchor="middle">2</text>
<rect x="429.0" y="467.2" width="48.9" height="15.5" rx="2.5" fill="#b9b6b0" opacity=".6"/>
<rect x="429.0" y="466.1" width="48.9" height="15.5" rx="2.5" fill="#f7f5f1"/>
<text x="453.4" y="478.4" font-size="12.5" fill="#505050" text-anchor="middle">2 units</text>
<circle cx="296.3" cy="456.3" r="6.4" fill="#d0021b" stroke="#fff" stroke-width="1.6"/>
<circle cx="320" cy="458.5" r="6.4" fill="#d0021b" stroke="#fff" stroke-width="1.6"/>
<circle cx="296.3" cy="459" r="6.4" fill="#d0021b" stroke="#fff" stroke-width="1.6"/>
<rect x="280.0" y="468.6" width="32.5" height="15.5" rx="2.5" fill="#b9b6b0" opacity=".6"/>
<rect x="280.0" y="467.4" width="32.5" height="15.5" rx="2.5" fill="#f7f5f1"/>
<text x="296.2" y="479.7" font-size="12.5" fill="#505050" text-anchor="middle">$11M</text>
<circle cx="320.7" cy="460.5" r="6.4" fill="#d0021b" stroke="#fff" stroke-width="1.6"/>
<circle cx="243.3" cy="462.7" r="6.4" fill="#d0021b" stroke="#fff" stroke-width="1.6"/>
<circle cx="459.4" cy="464" r="6.4" fill="#d0021b" stroke="#fff" stroke-width="1.6"/>
<rect x="442.2" y="479.2" width="39.7" height="15.5" rx="2.5" fill="#b9b6b0" opacity=".6"/>
<rect x="442.2" y="478.0" width="39.7" height="15.5" rx="2.5" fill="#f7f5f1"/>
<text x="462.0" y="490.4" font-size="12.5" fill="#505050" text-anchor="middle">$820K</text>
<circle cx="352.5" cy="467" r="6.4" fill="#d0021b" stroke="#fff" stroke-width="1.6"/>
<circle cx="479.2" cy="467.9" r="6.4" fill="#d0021b" stroke="#fff" stroke-width="1.6"/>
<circle cx="507" cy="471.9" r="6.4" fill="#d0021b" stroke="#fff" stroke-width="1.6"/>
<circle cx="362.3" cy="472.4" r="6.8" fill="#d0021b" stroke="#fff" stroke-width="1.6"/><text x="362.3" y="476.7" font-size="11.5" fill="#fff" text-anchor="middle">4</text>
<rect x="338.5" y="482.6" width="47.5" height="15.5" rx="2.5" fill="#b9b6b0" opacity=".6"/>
<rect x="338.5" y="481.4" width="47.5" height="15.5" rx="2.5" fill="#f7f5f1"/>
<text x="362.2" y="493.7" font-size="12.5" fill="#505050" text-anchor="middle">4 units</text>
<circle cx="346" cy="473.5" r="6.4" fill="#d0021b" stroke="#fff" stroke-width="1.6"/>
<circle cx="373" cy="473.5" r="6.4" fill="#d0021b" stroke="#fff" stroke-width="1.6"/>
<circle cx="335.2" cy="476.8" r="6.4" fill="#1a8cff" stroke="#fff" stroke-width="1.6"/>
<circle cx="514.9" cy="481.1" r="6.4" fill="#d0021b" stroke="#fff" stroke-width="1.6"/>
<rect x="493.8" y="491.7" width="44.9" height="15.5" rx="2.5" fill="#b9b6b0" opacity=".6"/>
<rect x="493.8" y="490.5" width="44.9" height="15.5" rx="2.5" fill="#f7f5f1"/>
<text x="516.2" y="502.9" font-size="12.5" fill="#505050" text-anchor="middle">$1.65M</text>
<circle cx="421" cy="483.8" r="6.8" fill="#d0021b" stroke="#fff" stroke-width="1.6"/><text x="421" y="488.1" font-size="11.5" fill="#fff" text-anchor="middle">2</text>
<rect x="395.9" y="493.8" width="48.9" height="15.5" rx="2.5" fill="#b9b6b0" opacity=".6"/>
<rect x="395.9" y="492.6" width="48.9" height="15.5" rx="2.5" fill="#f7f5f1"/>
<text x="420.4" y="504.9" font-size="12.5" fill="#505050" text-anchor="middle">2 units</text>
<circle cx="199.6" cy="485.4" r="6.4" fill="#d0021b" stroke="#fff" stroke-width="1.6"/>
<rect x="177.3" y="496.6" width="44.4" height="15.5" rx="2.5" fill="#b9b6b0" opacity=".6"/>
<rect x="177.3" y="495.4" width="44.4" height="15.5" rx="2.5" fill="#f7f5f1"/>
<text x="199.5" y="507.8" font-size="12.5" fill="#505050" text-anchor="middle">$1.48M</text>
<circle cx="410.4" cy="486.4" r="6.4" fill="#d0021b" stroke="#fff" stroke-width="1.6"/>
<circle cx="409.9" cy="486.5" r="6.4" fill="#d0021b" stroke="#fff" stroke-width="1.6"/>
<circle cx="528.1" cy="489" r="6.4" fill="#1a8cff" stroke="#fff" stroke-width="1.6"/>
<circle cx="241.6" cy="500.6" r="6.4" fill="#d0021b" stroke="#fff" stroke-width="1.6"/>
<rect x="223.8" y="510.7" width="36.8" height="15.5" rx="2.5" fill="#b9b6b0" opacity=".6"/>
<rect x="223.8" y="509.5" width="36.8" height="15.5" rx="2.5" fill="#f7f5f1"/>
<text x="242.2" y="521.8" font-size="12.5" fill="#505050" text-anchor="middle">$23M</text>
<rect x="389.3" y="509.6" width="46.3" height="15.5" rx="2.5" fill="#b9b6b0" opacity=".6"/>
<rect x="389.3" y="508.4" width="46.3" height="15.5" rx="2.5" fill="#f7f5f1"/>
<text x="412.5" y="520.8" font-size="12.5" fill="#505050" text-anchor="middle">$3.52M</text>
<circle cx="362.3" cy="501.6" r="6.8" fill="#d0021b" stroke="#fff" stroke-width="1.6"/><text x="362.3" y="505.90000000000003" font-size="11.5" fill="#fff" text-anchor="middle">2</text>
<rect x="338.5" y="511.8" width="47.5" height="15.5" rx="2.5" fill="#b9b6b0" opacity=".6"/>
<rect x="338.5" y="510.6" width="47.5" height="15.5" rx="2.5" fill="#f7f5f1"/>
<text x="362.2" y="523.0" font-size="12.5" fill="#505050" text-anchor="middle">2 units</text>
<rect x="480.5" y="510.9" width="45.0" height="15.5" rx="2.5" fill="#b9b6b0" opacity=".6"/>
<rect x="480.5" y="509.8" width="45.0" height="15.5" rx="2.5" fill="#f7f5f1"/>
<text x="503.0" y="522.1" font-size="12.5" fill="#505050" text-anchor="middle">$1.25M</text>
<circle cx="271.4" cy="510.3" r="6.4" fill="#d0021b" stroke="#fff" stroke-width="1.6"/>
<circle cx="330.3" cy="510.3" r="6.4" fill="#d0021b" stroke="#fff" stroke-width="1.6"/>
<rect x="249.8" y="521.0" width="44.2" height="15.5" rx="2.5" fill="#b9b6b0" opacity=".6"/>
<rect x="249.8" y="519.8" width="44.2" height="15.5" rx="2.5" fill="#f7f5f1"/>
<text x="271.9" y="532.1" font-size="12.5" fill="#505050" text-anchor="middle">$13.9M</text>
<rect x="327.7" y="524.3" width="45.3" height="15.5" rx="2.5" fill="#b9b6b0" opacity=".6"/>
<rect x="327.7" y="523.1" width="45.3" height="15.5" rx="2.5" fill="#f7f5f1"/>
<text x="350.4" y="535.4" font-size="12.5" fill="#505050" text-anchor="middle">$12.2M</text>
<circle cx="446.1" cy="523.4" r="6.8" fill="#d0021b" stroke="#fff" stroke-width="1.6"/><text x="446.1" y="527.6999999999999" font-size="11.5" fill="#fff" text-anchor="middle">2</text>
<circle cx="477.9" cy="528.7" r="6.8" fill="#d0021b" stroke="#fff" stroke-width="1.6"/><text x="477.9" y="533.0" font-size="11.5" fill="#fff" text-anchor="middle">4</text>
<rect x="452.8" y="540.0" width="48.9" height="15.5" rx="2.5" fill="#b9b6b0" opacity=".6"/>
<rect x="452.8" y="538.8" width="48.9" height="15.5" rx="2.5" fill="#f7f5f1"/>
<text x="477.2" y="551.2" font-size="12.5" fill="#505050" text-anchor="middle">4 units</text>
<circle cx="408.8" cy="530.8" r="6.4" fill="#d0021b" stroke="#fff" stroke-width="1.6"/>
<circle cx="409" cy="531.4" r="6.4" fill="#d0021b" stroke="#fff" stroke-width="1.6"/>
<rect x="388.0" y="543.4" width="39.6" height="15.5" rx="2.5" fill="#b9b6b0" opacity=".6"/>
<rect x="388.0" y="542.1" width="39.6" height="15.5" rx="2.5" fill="#f7f5f1"/>
<text x="407.8" y="554.5" font-size="12.5" fill="#505050" text-anchor="middle">$1.4M</text>
<circle cx="174.5" cy="538.9" r="6.4" fill="#1a8cff" stroke="#fff" stroke-width="1.6"/>
<rect x="150.3" y="548.6" width="47.6" height="15.5" rx="2.5" fill="#b9b6b0" opacity=".6"/>
<rect x="150.3" y="547.4" width="47.6" height="15.5" rx="2.5" fill="#f7f5f1"/>
<text x="174.1" y="559.8" font-size="12.5" fill="#505050" text-anchor="middle">$9.52M</text>
<circle cx="264.5" cy="540.6" r="6.4" fill="#d0021b" stroke="#fff" stroke-width="1.6"/>
<rect x="244.4" y="551.4" width="41.1" height="15.5" rx="2.5" fill="#b9b6b0" opacity=".6"/>
<rect x="244.4" y="550.1" width="41.1" height="15.5" rx="2.5" fill="#f7f5f1"/>
<text x="264.9" y="562.5" font-size="12.5" fill="#505050" text-anchor="middle">$2.8M</text>
<rect x="450.0" y="552.6" width="54.3" height="15.5" rx="2.5" fill="#b9b6b0" opacity=".6"/>
<rect x="450.0" y="551.4" width="54.3" height="15.5" rx="2.5" fill="#f7f5f1"/>
<text x="477.1" y="563.8" font-size="12.5" fill="#505050" text-anchor="middle">4 units</text>
<rect x="386.6" y="555.8" width="45.0" height="15.5" rx="2.5" fill="#b9b6b0" opacity=".6"/>
<rect x="386.6" y="554.6" width="45.0" height="15.5" rx="2.5" fill="#f7f5f1"/>
<text x="409.1" y="567.0" font-size="12.5" fill="#505050" text-anchor="middle">$410K</text>
<circle cx="451.4" cy="568.4" r="6.4" fill="#1a8cff" stroke="#fff" stroke-width="1.6"/>
<circle cx="186.6" cy="589.3" r="6.4" fill="#d0021b" stroke="#fff" stroke-width="1.6"/>
<circle cx="162.8" cy="592.5" r="6.4" fill="#d0021b" stroke="#fff" stroke-width="1.6"/>
<circle cx="299.5" cy="592.5" r="6.4" fill="#1a8cff" stroke="#fff" stroke-width="1.6"/>
<rect x="140.5" y="602.4" width="44.4" height="15.5" rx="2.5" fill="#b9b6b0" opacity=".6"/>
<rect x="140.5" y="601.2" width="44.4" height="15.5" rx="2.5" fill="#f7f5f1"/>
<text x="162.7" y="613.6" font-size="12.5" fill="#505050" text-anchor="middle">$2.65M</text>
<rect x="275.7" y="602.4" width="47.6" height="15.5" rx="2.5" fill="#b9b6b0" opacity=".6"/>
<rect x="275.7" y="601.2" width="47.6" height="15.5" rx="2.5" fill="#f7f5f1"/>
<text x="299.5" y="613.6" font-size="12.5" fill="#505050" text-anchor="middle">$2.87M</text>
<circle cx="269.3" cy="593.6" r="6.4" fill="#d0021b" stroke="#fff" stroke-width="1.6"/>
<circle cx="152.4" cy="596.8" r="6.4" fill="#d0021b" stroke="#fff" stroke-width="1.6"/>
<circle cx="272.5" cy="604.4" r="6.4" fill="#d0021b" stroke="#fff" stroke-width="1.6"/>
<rect x="252.0" y="616.5" width="39.0" height="15.5" rx="2.5" fill="#b9b6b0" opacity=".6"/>
<rect x="252.0" y="615.2" width="39.0" height="15.5" rx="2.5" fill="#f7f5f1"/>
<text x="271.5" y="627.6" font-size="12.5" fill="#505050" text-anchor="middle">$485K</text>
<circle cx="238.5" cy="608.7" r="6.4" fill="#d0021b" stroke="#fff" stroke-width="1.6"/>
<rect x="215.2" y="619.7" width="45.4" height="15.5" rx="2.5" fill="#b9b6b0" opacity=".6"/>
<rect x="215.2" y="618.5" width="45.4" height="15.5" rx="2.5" fill="#f7f5f1"/>
<text x="237.9" y="630.9" font-size="12.5" fill="#505050" text-anchor="middle">$3.27M</text>
<circle cx="262.8" cy="633.8" r="6.8" fill="#d0021b" stroke="#fff" stroke-width="1.6"/><text x="262.8" y="638.0999999999999" font-size="11.5" fill="#fff" text-anchor="middle">2</text>
<rect x="237.9" y="644.1" width="50.8" height="15.5" rx="2.5" fill="#b9b6b0" opacity=".6"/>
<rect x="237.9" y="642.9" width="50.8" height="15.5" rx="2.5" fill="#f7f5f1"/>
<text x="263.3" y="655.2" font-size="12.5" fill="#505050" text-anchor="middle">2 units</text>
</g>
<defs><linearGradient id="rsh" x1="0" x2="1"><stop offset="0" stop-color="#000" stop-opacity="0"/><stop offset="1" stop-color="#000" stop-opacity=".28"/></linearGradient></defs>
<rect x="688" y="162" width="8" height="670" fill="url(#rsh)"/>
</g></svg>
<div class="a" style="left:589px;top:202px;width:100px;height:40px;background:#fff;border-radius:4px;box-shadow:0 1px 3px rgba(0,0,0,.25)"></div>
<div class="t" style="left:596.5px;top:213.5px;font-size:15px;color:#0074e4">More Map</div>
<svg class="a" style="left:668px;top:212px" width="12" height="18" viewBox="0 0 12 18"><path d="M3 2 L10 9 L3 16" fill="none" stroke="#0074e4" stroke-width="2"/></svg>
<div class="a" style="left:649px;top:250px;width:40px;height:40px;border-radius:50%;background:#fff;box-shadow:0 1px 3px rgba(0,0,0,.25)"></div>
<div class="a" style="left:659px;top:268.5px;width:20px;height:3px;background:#333"></div>
<div class="a" style="left:667.5px;top:260px;width:3px;height:20px;background:#333"></div>
<div class="a" style="left:649px;top:295px;width:40px;height:40px;border-radius:50%;background:#fff;box-shadow:0 1px 3px rgba(0,0,0,.25)"></div>
<div class="a" style="left:659px;top:313px;width:20px;height:3px;background:#333"></div>
<div class="a" style="left:649px;top:345px;width:40px;height:40px;border-radius:4px;background:#fff;box-shadow:0 1px 3px rgba(0,0,0,.25)"></div>
<svg class="a" style="left:653px;top:352px" width="32" height="26" viewBox="0 0 32 26"><path d="M16 2 L31 9 L16 16 L1 9 Z" fill="#333"/><path d="M7 13 L7 19 C10 23 22 23 25 19 L25 13 L16 18 Z" fill="#333"/><path d="M16 9 L27 12 L27 19" stroke="#333" stroke-width="1.5" fill="none"/></svg>
<div class="a" style="left:649px;top:395px;width:40px;height:25px;border-radius:4px;background:#fff;box-shadow:0 1px 3px rgba(0,0,0,.25)"></div>
<div class="t" style="left:653.5px;top:402px;font-size:11.5px;color:#222">Map</div>
<div class="a" style="left:676px;top:407px;width:0;height:0;border-left:4px solid transparent;border-right:4px solid transparent;border-top:4px solid #111"></div>
<div class="a" style="left:649px;top:430px;width:40px;height:40px;border-radius:4px;background:#0074e4"></div>
<svg class="a" style="left:649px;top:430px" width="40" height="40" viewBox="0 0 40 40"><path d="M22.5 15.5 A10 10 0 1 0 19.5 24" fill="none" stroke="#fff" stroke-width="2"/><circle cx="22.5" cy="17" r="2" fill="#fff"/><path d="M24 18 L34 27 L29.5 27.5 L32 33 L30 34 L27.5 28.5 L24 31.5 Z" fill="#fff"/></svg>
<svg class="a" style="left:10px;top:808px" width="56" height="24" viewBox="0 0 56 24"><path d="M1.5 2.5 L5.5 4 L5.5 15.5 L11 12.5 L8 10.5 L7 7.5 L15.5 10.5 L15.5 15 L5.5 20.5 L1.5 18.5 Z" fill="#4a4a4a"/><text x="22" y="17.5" font-size="15.5" fill="#5a5a5a" font-family="Liberation Sans, sans-serif">bing</text></svg>
<svg class="a" style="left:630px;top:812px" width="60" height="18" viewBox="0 0 60 18"><path d="M1 9 L9 3 L13 6 L7 7 L12 9 L2 16 L14 13 L12 16 L1 17 Z" fill="#2a9d48"/><text x="14" y="15" font-size="15" font-weight="bold" fill="#1277e1" font-family="Liberation Sans, sans-serif">Zillow</text></svg>

<div class="a" style="left:2px;top:162px;width:694px;height:35px;background:rgba(42,42,42,.84)"></div>
<div class="t" style="left:12px;top:171.5px;font-size:15.4px;color:#fff"><b>Only showing 500 homes.</b> Zoom in, or use filters to narrow your search.</div>

<!-- right panel -->
<div class="a" style="left:696px;top:162px;width:678px;height:670px;background:#fff"></div>
<div class="a" style="left:1374px;top:162px;width:14px;height:622px;background:linear-gradient(90deg,#d9d9d9,#f4f4f4 40%,#fbfbfb);border-radius:0 0 7px 7px;border-left:1px solid #cfcfcf"></div>
<div class="a" style="left:1374px;top:784px;width:14px;height:32px;background:#f6f6f6;border-left:1px solid #cfcfcf;border-bottom:1px solid #d8d8d8"></div>
<div class="a" style="left:1375px;top:800px;width:13px;height:1px;background:#d0d0d0"></div>
<div class="a" style="left:1377px;top:787px;width:0;height:0;border-left:4.5px solid transparent;border-right:4.5px solid transparent;border-bottom:7px solid #555"></div>
<div class="a" style="left:1377px;top:805px;width:0;height:0;border-left:4.5px solid transparent;border-right:4.5px solid transparent;border-top:7px solid #555"></div>
<div class="a" style="left:1383px;top:247px;width:6px;height:270px;border-radius:5px 0 0 5px;background:#6b6b6b;border:1px solid #fff;border-right:none"></div>
<div class="a" style="left:1375px;top:170px;width:12px;height:78px;border-radius:6px;background:linear-gradient(90deg,#5aa0e8,#9fd0f8);border:1px solid #3a7fd0"></div>


<div class="a" style="left:696px;top:162px;width:678px;height:10px;background:linear-gradient(rgba(0,0,0,.13),rgba(0,0,0,0))"></div>
<!-- loading -->
<div class="a" style="left:991px;top:241px;width:15px;height:15px;border-radius:50%;border:2.2px solid #d7e8fa;border-top-color:#2a86e0;border-right-color:#3d92e6;transform:rotate(15deg)"></div>
<div class="t" style="left:1011.5px;top:241.5px;font-size:17px;color:#333">Loading</div>
<div class="t" style="left:711px;top:317.5px;font-size:25px;letter-spacing:-0.2px;color:#3c3c3c">Greenwich Village New York Real Estate</div>
<div class="t" style="left:1181.5px;top:325.3px;font-size:15.6px;color:#333">153 homes for sale.</div>
<div class="t" style="left:711px;top:365px;font-size:15.8px;color:#0074e4">Homes for You</div>
<div class="a" style="left:711px;top:392px;width:104px;height:3px;background:#0074e4"></div>
<div class="t" style="left:846px;top:365px;font-size:15.3px;color:#333">Newest</div>
<div class="t" style="left:927.5px;top:365px;font-size:15.3px;color:#333">Cheapest</div>
<div class="t" style="left:1023.5px;top:365px;font-size:16px;color:#333">More</div>
<div class="a" style="left:1022px;top:360px;width:39px;height:36px;border:1px dotted #333"></div>

<!-- cards -->
<svg class="card" style="left:702px;top:411px" width="329" height="179" viewBox="0 0 329 179">
<defs><linearGradient id="shd" x1="0" y1="0" x2="0" y2="1"><stop offset="0" stop-color="#000" stop-opacity="0"/><stop offset=".45" stop-color="#000" stop-opacity="0"/><stop offset="1" stop-color="#000" stop-opacity=".55"/></linearGradient></defs>
<rect width="329" height="179" fill="#a89885"/>
<path d="M0 0 L44 0 Q50 30 44 60 Q52 90 40 110 L28 179 L0 179 Z" fill="#3f6430"/>
<path d="M0 0 L25 0 Q30 40 22 80 L15 179 L0 179 Z" fill="#2c4a22"/>
<rect x="48" y="43" width="110" height="7" fill="#c2b198"/><rect x="40" y="97" width="118" height="7" fill="#c2b198"/><rect x="40" y="134" width="118" height="6" fill="#b9a890"/>
<rect x="76" y="0" width="30" height="179" fill="#9b8b78" opacity=".6"/>
<rect x="53" y="3" width="39" height="37" fill="#c9d7dc" stroke="#6d5c48" stroke-width="3"/>
<rect x="44" y="52" width="41" height="45" fill="#5b7a86" stroke="#6d5c48" stroke-width="3"/>
<rect x="110" y="36" width="47" height="47" fill="#94bbd9" stroke="#6d5c48" stroke-width="3"/>
<rect x="116" y="0" width="41" height="23" fill="#b0d0e6" stroke="#6d5c48" stroke-width="3"/>
<rect x="105" y="105" width="51" height="47" fill="#9aaba2" stroke="#6d5c48" stroke-width="3"/>
<rect x="37" y="117" width="39" height="37" fill="#56665a" stroke="#6d5c48" stroke-width="3"/>
<rect x="30" y="158" width="299" height="21" fill="#857563"/><path d="M0 100 L30 110 L34 179 L0 179 Z" fill="#243d1c"/>
<rect width="329" height="179" fill="url(#shd)"/>
</svg>
<svg class="card" style="left:1038px;top:411px" width="329" height="179" viewBox="0 0 329 179">
<rect width="329" height="179" fill="#f0f0ef"/>
<rect x="0" y="0" width="329" height="25" fill="#e6e6e5"/>
<path d="M170 0 L329 0 L329 20 L250 35 L170 20 Z" fill="#f4f4f4"/>
<rect x="22" y="20" width="28" height="159" fill="#f6f6f6"/>
<rect x="162" y="20" width="120" height="110" fill="#f5f5f4"/>
<rect x="50" y="55" width="70" height="90" fill="#3b2b29"/>
<rect x="120" y="52" width="42" height="32" fill="#3f302c"/>
<rect x="130" y="66" width="18" height="14" fill="#777"/>
<rect x="125" y="84" width="37" height="28" fill="#5d4a3d"/>
<rect x="190" y="58" width="30" height="34" fill="#8f7555"/>
<rect x="282" y="40" width="47" height="90" fill="#e2e2e2"/>
<rect x="0" y="140" width="329" height="39" fill="#5a4840"/>
<rect x="110" y="113" width="120" height="66" fill="#3b2724"/>
<rect x="195" y="110" width="134" height="18" fill="#4d3c36"/>
<rect x="230" y="128" width="99" height="51" fill="#8c735c"/><rect x="290" y="95" width="39" height="40" fill="#d9d2c6"/><rect x="255" y="120" width="12" height="59" fill="#b08a62"/><rect x="300" y="128" width="10" height="51" fill="#a88460"/>
<rect width="329" height="179" fill="url(#shd)" opacity=".7"/>
</svg>
<svg class="card" style="left:702px;top:596px" width="329" height="179" viewBox="0 0 329 179">
<rect width="329" height="179" fill="#ddd5c8"/>
<rect x="0" y="0" width="329" height="38" fill="#efece8"/>
<rect x="50" y="0" width="30" height="30" fill="#e2ddd6"/>
<rect x="5" y="38" width="35" height="85" fill="#f1eee9"/>
<rect x="75" y="40" width="130" height="75" fill="#eeecea"/>
<rect x="205" y="40" width="55" height="75" fill="#d9cdb8"/>
<rect x="260" y="40" width="69" height="85" fill="#e4ddd0"/>
<rect x="0" y="118" width="329" height="61" fill="#aaa296"/>
<rect x="100" y="108" width="150" height="32" fill="#95908a"/>
<rect x="180" y="110" width="40" height="15" fill="#4f7a7a"/>
<rect x="110" y="140" width="120" height="20" fill="#b8b09e"/>
<rect x="250" y="112" width="28" height="28" fill="#2e2e2e"/>
<rect x="90" y="160" width="200" height="19" fill="#85807a"/>
<rect x="0" y="150" width="40" height="29" fill="#4f6f6c"/>
<rect x="290" y="150" width="39" height="29" fill="#4a6a6a"/>
<rect width="329" height="179" fill="url(#shd)" opacity=".6"/>
</svg>
<svg class="card" style="left:1038px;top:596px" width="329" height="179" viewBox="0 0 329 179">
<rect width="329" height="179" fill="#b26655"/>
<rect x="0" y="0" width="30" height="179" fill="#8c3a38"/>
<rect x="0" y="64" width="30" height="12" fill="#d9d9d9"/>
<rect x="0" y="100" width="30" height="79" fill="#cfcfcf"/>
<rect x="299" y="0" width="30" height="179" fill="#8c3a38"/>
<rect x="299" y="34" width="30" height="46" fill="#d6d6d6"/>
<rect x="299" y="100" width="30" height="79" fill="#c9c9c9"/>
<rect x="37" y="27" width="32" height="6" fill="#7d4335"/><rect x="37" y="98" width="32" height="6" fill="#7d4335"/><rect x="83" y="27" width="32" height="6" fill="#7d4335"/><rect x="83" y="98" width="32" height="6" fill="#7d4335"/><rect x="127" y="27" width="32" height="6" fill="#7d4335"/><rect x="127" y="98" width="32" height="6" fill="#7d4335"/><rect x="171" y="27" width="32" height="6" fill="#7d4335"/><rect x="171" y="98" width="32" height="6" fill="#7d4335"/><rect x="214" y="27" width="32" height="6" fill="#7d4335"/><rect x="214" y="98" width="32" height="6" fill="#7d4335"/><rect x="261" y="27" width="32" height="6" fill="#7d4335"/><rect x="261" y="98" width="32" height="6" fill="#7d4335"/><rect x="43" y="0" width="20" height="12" fill="#b9bcc0" stroke="#333" stroke-width="2.5"/><rect x="89" y="0" width="20" height="12" fill="#b9bcc0" stroke="#333" stroke-width="2.5"/><rect x="133" y="0" width="20" height="12" fill="#b9bcc0" stroke="#333" stroke-width="2.5"/><rect x="177" y="0" width="20" height="12" fill="#b9bcc0" stroke="#333" stroke-width="2.5"/><rect x="220" y="0" width="20" height="12" fill="#b9bcc0" stroke="#333" stroke-width="2.5"/><rect x="267" y="0" width="20" height="12" fill="#b9bcc0" stroke="#333" stroke-width="2.5"/><rect x="43" y="36" width="20" height="37" fill="#c5c9cd" stroke="#2f2f2f" stroke-width="2.5"/><rect x="44" y="55" width="18" height="17" fill="#8a8e92"/><rect x="41" y="73" width="24" height="3" fill="#7d4335"/><rect x="89" y="36" width="20" height="37" fill="#c5c9cd" stroke="#2f2f2f" stroke-width="2.5"/><rect x="90" y="55" width="18" height="17" fill="#8a8e92"/><rect x="87" y="73" width="24" height="3" fill="#7d4335"/><rect x="133" y="36" width="20" height="37" fill="#c5c9cd" stroke="#2f2f2f" stroke-width="2.5"/><rect x="134" y="55" width="18" height="17" fill="#8a8e92"/><rect x="131" y="73" width="24" height="3" fill="#7d4335"/><rect x="177" y="36" width="20" height="37" fill="#c5c9cd" stroke="#2f2f2f" stroke-width="2.5"/><rect x="178" y="55" width="18" height="17" fill="#8a8e92"/><rect x="175" y="73" width="24" height="3" fill="#7d4335"/><rect x="220" y="36" width="20" height="37" fill="#c5c9cd" stroke="#2f2f2f" stroke-width="2.5"/><rect x="221" y="55" width="18" height="17" fill="#8a8e92"/><rect x="218" y="73" width="24" height="3" fill="#7d4335"/><rect x="267" y="36" width="20" height="37" fill="#c5c9cd" stroke="#2f2f2f" stroke-width="2.5"/><rect x="268" y="55" width="18" height="17" fill="#8a8e92"/><rect x="265" y="73" width="24" height="3" fill="#7d4335"/><rect x="41" y="106" width="24" height="73" fill="#36302e"/><rect x="46" y="112" width="14" height="30" fill="#6e6660"/><rect x="87" y="106" width="24" height="73" fill="#36302e"/><rect x="92" y="112" width="14" height="30" fill="#6e6660"/><rect x="131" y="106" width="24" height="73" fill="#36302e"/><rect x="136" y="112" width="14" height="30" fill="#6e6660"/><rect x="175" y="106" width="24" height="73" fill="#36302e"/><rect x="180" y="112" width="14" height="30" fill="#6e6660"/><rect x="218" y="106" width="24" height="73" fill="#36302e"/><rect x="223" y="112" width="14" height="30" fill="#6e6660"/><rect x="265" y="106" width="24" height="73" fill="#36302e"/><rect x="270" y="112" width="14" height="30" fill="#6e6660"/>
<rect x="0" y="166" width="329" height="13" fill="#6a6462"/>
<rect width="329" height="179" fill="url(#shd)" opacity=".45"/>
</svg>
<svg class="card" style="left:702px;top:782px;height:50px" width="329" height="50" viewBox="0 0 329 50">
<rect width="329" height="50" fill="#b3563f"/>
<rect x="0" y="0" width="329" height="3" fill="#3a2a26"/>
<rect x="0" y="0" width="38" height="50" fill="#6e6b73"/>
<rect x="283" y="0" width="46" height="50" fill="#bdbdbd"/>
<path d="M283 8 L329 8 L329 38 L290 38 Z" fill="#22262b"/>
<rect x="82" y="40" width="64" height="7" fill="#6d6d6d"/><rect x="176" y="40" width="64" height="7" fill="#6d6d6d"/>
</svg>
<svg class="card" style="left:1038px;top:782px;height:50px" width="329" height="50" viewBox="0 0 329 50">
<defs><linearGradient id="c6" x1="0" y1="0" x2="0" y2="1"><stop offset="0" stop-color="#aeaeae"/><stop offset=".5" stop-color="#cfcfcf"/><stop offset="1" stop-color="#dedede"/></linearGradient></defs>
<rect width="329" height="50" fill="url(#c6)"/>
<path d="M0 0 L60 0 L120 50 L0 50 Z" fill="#d8d8d8" opacity=".8"/>
<path d="M260 0 L329 0 L329 50 L210 50 Z" fill="#d6d6d6" opacity=".8"/>
<rect x="120" y="44" width="95" height="6" fill="#e8e8e8"/>
</svg>
<div class="t ph" style="left:708px;top:420.5px">8 photos</div>
<div class="a" style="left:707px;top:517.5px;width:14px;height:14px;border-radius:50%;background:#e00;border:2px solid #fff"></div>
<div class="t stat" style="left:725.7px;top:517.6px;font-size:12.2px">FOR SALE BY OWNER</div>
<div class="t price" style="left:708px;top:535px;font-size:28px">$3,100,000 <span style="font-size:15.5px;font-weight:bold">5 bds</span></div>
<div class="t sub" style="left:708px;top:566px;font-size:13.4px">2 days on Zillow &nbsp;•&nbsp; 542 LaGuardia Pl</div>

<div class="t ph" style="left:1044px;top:420.5px">8 photos</div>
<div class="a" style="left:1043px;top:517.5px;width:14px;height:14px;border-radius:50%;background:#e00;border:2px solid #fff"></div>
<div class="t stat" style="left:1061.7px;top:517.6px;font-size:12.2px">FOR SALE BY OWNER</div>
<div class="t price" style="left:1044px;top:535px;font-size:28px">$3,000,000 <span class="facts" style="font-size:15.5px">2 bds • 2 ba • 1,236 s...</span></div>
<div class="t sub" style="left:1044px;top:566px;font-size:13.4px">2 days on Zillow &nbsp;•&nbsp; 115 4th Ave APT 7E, New York, ...</div>
<svg class="a" style="left:1326px;top:416px" width="36" height="34" viewBox="0 0 36 34"><path d="M18 31 L4.5 17.5 C-0.5 12.5 1.5 3 9 2.5 C13 2.2 16 4.5 18 8 C20 4.5 23 2.2 27 2.5 C34.5 3 36.5 12.5 31.5 17.5 Z" fill="rgba(40,40,40,.65)" stroke="#fff" stroke-width="3" stroke-linejoin="round"/></svg>

<div class="t ph" style="left:708px;top:605.5px">14 photos</div>
<div class="a" style="left:707.5px;top:683.4px;width:14px;height:14px;border-radius:50%;background:#e00;border:2px solid #fff"></div>
<div class="t stat" style="left:725.5px;top:684px;font-size:12.2px">CONDO FOR SALE</div>
<div class="t price" style="left:708px;top:700.8px;font-size:28px">$8,250,000 <span class="facts" style="font-size:15.5px">4 bds • 5 ba • 4,514 s...</span></div>
<div class="t sub" style="left:708px;top:732.6px;font-size:13.4px">2 days on Zillow &nbsp;•&nbsp; 17 E 12th St # 3, New York, NY</div>
<div class="t sub" style="left:708px;top:752.4px;font-size:13.4px">Douglas Elliman</div>

<div class="t ph" style="left:1044px;top:605.5px">14 photos</div>
<div class="a" style="left:1043.4px;top:703.1px;width:14px;height:14px;border-radius:50%;background:#e00;border:2px solid #fff"></div>
<div class="t stat" style="left:1061.4px;top:704.3px;font-size:12.4px">TOWNHOUSE FOR SALE</div>
<div class="t price" style="left:1044.5px;top:720.5px;font-size:28px">$15,650,000 <span class="facts" style="font-size:15.5px">12 bds • 12 ba • 9,...</span></div>
<div class="t sub" style="left:1044.5px;top:753px;font-size:13.4px">2 days on Zillow &nbsp;•&nbsp; 133-135 W 13th St, Manhattan, ...</div>
<svg class="a" style="left:1326px;top:601.5px" width="36" height="34" viewBox="0 0 36 34"><path d="M18 31 L4.5 17.5 C-0.5 12.5 1.5 3 9 2.5 C13 2.2 16 4.5 18 8 C20 4.5 23 2.2 27 2.5 C34.5 3 36.5 12.5 31.5 17.5 Z" fill="rgba(40,40,40,.65)" stroke="#fff" stroke-width="3" stroke-linejoin="round"/></svg>

<div class="t ph" style="left:708px;top:791.5px">13 photos</div>
<svg class="a" style="left:990px;top:788px" width="36" height="34" viewBox="0 0 36 34"><path d="M18 31 L4.5 17.5 C-0.5 12.5 1.5 3 9 2.5 C13 2.2 16 4.5 18 8 C20 4.5 23 2.2 27 2.5 C34.5 3 36.5 12.5 31.5 17.5 Z" fill="rgba(40,40,40,.65)" stroke="#fff" stroke-width="3" stroke-linejoin="round"/></svg>
<div class="t ph" style="left:1044px;top:791.5px">8 photos</div>
<svg class="a" style="left:1326px;top:788px" width="36" height="34" viewBox="0 0 36 34"><path d="M18 31 L4.5 17.5 C-0.5 12.5 1.5 3 9 2.5 C13 2.2 16 4.5 18 8 C20 4.5 23 2.2 27 2.5 C34.5 3 36.5 12.5 31.5 17.5 Z" fill="rgba(40,40,40,.65)" stroke="#fff" stroke-width="3" stroke-linejoin="round"/></svg>

<!-- dropdown -->
<div class="a" style="left:860px;top:395px;width:200px;height:265px;background:#fff;border:1px solid #bdbdbd;box-shadow:0 2px 4px rgba(0,0,0,.25)"></div>
<div class="t dd" style="left:871.5px;top:406.1px;font-size:13.3px">Price (High to Low)</div>
<div class="t dd" style="left:871.5px;top:439.2px;font-size:13.3px">Bedrooms</div>
<div class="t dd" style="left:871.5px;top:472.3px;font-size:13.3px">Bathrooms</div>
<div class="t dd" style="left:871.5px;top:505.3px;font-size:13.3px">Square Feet</div>
<div class="t dd" style="left:871.5px;top:538.4px;font-size:13.3px">Year Built</div>
<div class="t dd" style="left:871.5px;top:571.4px;font-size:13.3px">Lot Size</div>
<div class="t dd" style="left:871.5px;top:604.5px;font-size:13.3px">Zestimate (High to Low)</div>
<div class="t dd" style="left:871.5px;top:637.6px;font-size:13.3px">Zestimate (Low to High)</div>
</body></html>
